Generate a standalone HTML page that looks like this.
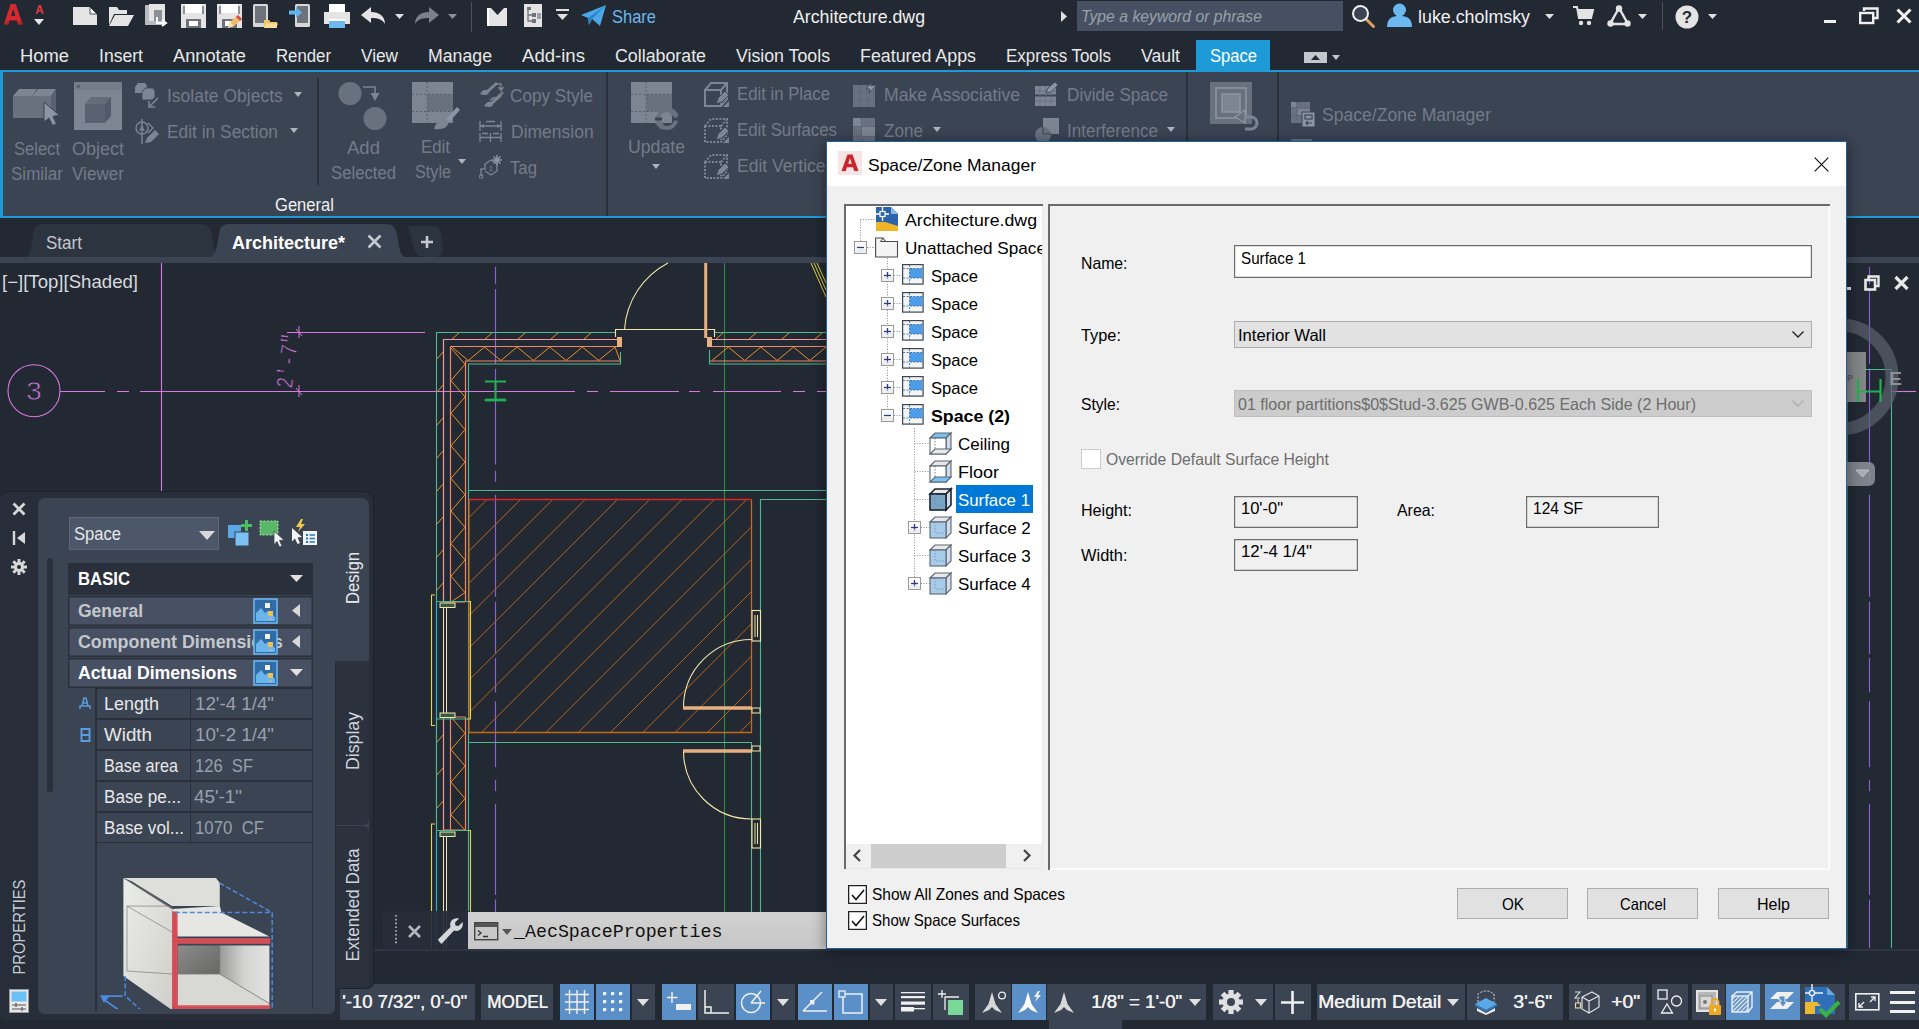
<!DOCTYPE html>
<html><head><meta charset="utf-8"><title>Architecture.dwg</title>
<style>
html,body{margin:0;padding:0;background:#222933;}
body{width:1919px;height:1029px;position:relative;overflow:hidden;font-family:"Liberation Sans",sans-serif;}
.a{position:absolute;display:block;}
.t{position:absolute;white-space:pre;transform-origin:0 50%;}
svg{overflow:visible}
svg text{font-family:"Liberation Sans",sans-serif;}
</style></head><body>
<!-- s_title -->
<div class="a" style="left:0px;top:0px;width:1919px;height:70px;background:#222933;"></div>
<svg class="a" style="left:3px;top:2.5px;" width="20.5" height="23.5" viewBox="0 0 24 27"><path d="M1 25 L9 1 L15 1 L23 25 L17.5 25 L15.8 19.5 L8 19.5 L6.3 25 Z M9.5 15 L14.4 15 L12 6.5 Z" fill="#d42a2f"/><path d="M1 25 L6.3 25 L8 19.5 L15.8 19.5 L17.5 25 L23 25 L21.5 21 L3 21Z" fill="#a81c22" opacity=".55"/></svg>
<svg class="a" style="left:34.5px;top:5px;" width="9.5" height="9.5" viewBox="0 0 12 14"><path d="M0 13 L4.3 0 L7.7 0 L12 13 L9 13 L8.2 10 L3.8 10 L3 13 Z M4.7 7.6 L7.3 7.6 L6 3 Z" fill="#e0383d"/></svg>
<svg class="a" style="left:34.3px;top:19.0px;" width="10" height="6"><polygon points="0,0 10,0 5.0,6" fill="#e6e6e6"/></svg>
<svg class="a" style="left:73px;top:7px;" width="25" height="19"><path d="M0 0 H17 L24 7 V18 H0 Z" fill="#e4e4e4"/><path d="M17 0 V7 H24 Z" fill="#fafafa" stroke="#222933" stroke-width=".8"/></svg>
<svg class="a" style="left:108px;top:6px;" width="26" height="20"><path d="M1 1 H9 L11 4 H19 V8 H6 L1 19 Z" fill="#e4e4e4"/><path d="M7 9 H26 L20 20 H1 Z" fill="#e4e4e4"/></svg>
<svg class="a" style="left:145px;top:4px;" width="24" height="23"><rect x="0" y="1" width="20" height="20" fill="#b9bcc2"/><rect x="4" y="0" width="16" height="17" fill="#e4e4e4"/><rect x="9" y="6" width="8" height="11" fill="#8c9098"/><path d="M12 13 V19 H20 M17 16 L21 19 L17 22" stroke="#fff" stroke-width="2" fill="none"/></svg>
<svg class="a" style="left:181px;top:4px;" width="25" height="24"><path d="M0 0 H25 V24 H0 Z" fill="#e4e4e4"/><rect x="4" y="0" width="17" height="9" fill="#fff"/><rect x="2" y="2" width="2" height="8" fill="#8c9098"/><rect x="21" y="2" width="2" height="8" fill="#8c9098"/><rect x="5" y="15" width="15" height="9" fill="#6d727b"/><rect x="8" y="17" width="9" height="5" fill="#fff"/></svg>
<svg class="a" style="left:217px;top:4px;" width="25" height="24"><path d="M0 0 H25 V24 H0 Z" fill="#e4e4e4"/><rect x="4" y="0" width="17" height="9" fill="#fff"/><rect x="2" y="2" width="2" height="8" fill="#8c9098"/><rect x="21" y="2" width="2" height="8" fill="#8c9098"/><rect x="5" y="15" width="15" height="9" fill="#6d727b"/><rect x="8" y="17" width="9" height="5" fill="#fff"/></svg>
<svg class="a" style="left:228px;top:15px;" width="14" height="13"><path d="M0 13 L2 7 L10 0 L14 4 L6 11 Z" fill="#f0c068"/><path d="M10 0 L14 4 L12 6 L8 2Z" fill="#e0484d"/><path d="M0 13 L2 7 L6 11Z" fill="#f6e0b0"/></svg>
<svg class="a" style="left:253px;top:4px;" width="24" height="24"><rect x="0" y="0" width="15" height="23" rx="1.5" fill="#d8d8d8"/><rect x="2" y="2" width="11" height="17" fill="#6d727b"/><path d="M11 16 H16 L17.5 18 H24 V24 H11 Z" fill="#f0c46c"/><path d="M13 19.5 H25 L23 24 H11Z" fill="#f7dc9a"/></svg>
<svg class="a" style="left:289px;top:4px;" width="22" height="24"><rect x="6" y="0" width="15" height="23" rx="1.5" fill="#d8d8d8"/><rect x="8" y="2" width="11" height="17" fill="#6d727b"/><path d="M0 6.5 H7 V3 L13 8.5 L7 14 V10.5 H0Z" fill="#5fb4f0"/></svg>
<svg class="a" style="left:324px;top:4px;" width="26" height="24"><rect x="5" y="0" width="16" height="8" fill="#fff"/><path d="M0 8 H26 V20 H21 V15 H5 V20 H0Z" fill="#e4e4e4"/><rect x="5" y="16" width="16" height="8" fill="#6cb8f0"/><rect x="5" y="15" width="16" height="2" fill="#fff"/></svg>
<svg class="a" style="left:361px;top:7px;" width="25" height="17"><path d="M0 8 L10 0 V5 C18 5 24 9 24 17 C21 12 17 11 10 11 V16 Z" fill="#e4e4e4"/></svg>
<svg class="a" style="left:394.5px;top:13.5px;" width="9" height="5"><polygon points="0,0 9,0 4.5,5" fill="#e0e0e0"/></svg>
<svg class="a" style="left:414px;top:7px;" width="25" height="17"><path d="M25 8 L15 0 V5 C7 5 1 9 1 17 C4 12 8 11 15 11 V16 Z" fill="#7a808c"/></svg>
<svg class="a" style="left:447.5px;top:13.5px;" width="9" height="5"><polygon points="0,0 9,0 4.5,5" fill="#8a909c"/></svg>
<div class="a" style="left:471px;top:2px;width:1px;height:30px;background:#4a5260;"></div>
<svg class="a" style="left:487px;top:6px;" width="21" height="21"><path d="M1 2 L4 2 L10.5 9 L17 2 L20 2 V20 H1 Z" fill="#e4e4e4"/><path d="M1 2 V20" stroke="#fff" stroke-width="2"/><path d="M4 0 L17 0 L10.5 7Z" fill="#222933"/></svg>
<svg class="a" style="left:524px;top:4px;" width="18" height="23"><path d="M0 0 H13 L18 0 V23 H0Z" fill="#e4e4e4"/><path d="M4 5 V17 H8 M4 11 H8" stroke="#6d727b" stroke-width="1.3" fill="none"/><rect x="8" y="9" width="4" height="4" fill="#6d727b"/><rect x="8" y="15" width="4" height="4" fill="#6d727b"/><rect x="3" y="3" width="4" height="3" fill="#6d727b"/><rect x="13" y="9" width="4" height="6" fill="#9aa0a8"/></svg>
<div class="a" style="left:556px;top:9px;width:13px;height:2px;background:#e0e0e0;"></div>
<svg class="a" style="left:557.0px;top:14.0px;" width="11" height="6"><polygon points="0,0 11,0 5.5,6" fill="#e0e0e0"/></svg>
<svg class="a" style="left:581px;top:5px;" width="25" height="21"><path d="M0 10 L25 0 L19 21 L11 14 L8 20 L7 13 Z" fill="#4aa8e8"/><path d="M7 13 L25 0 L11 14 L8 20Z" fill="#2b84c8"/></svg>
<span class="t" style="left:612.0px;top:8.2px;font-size:18px;line-height:18px;color:#6cb8f0;transform:scaleX(0.9160);">Share</span>
<span class="t" style="left:793.0px;top:8.5px;font-size:17.5px;line-height:17.5px;color:#f0f0f0;transform:scaleX(1.0127);">Architecture.dwg</span>
<svg class="a" style="left:1060.5px;top:11.0px;" width="6" height="11"><polygon points="0,0 0,11 6,5.5" fill="#e0e0e0"/></svg>
<div class="a" style="left:1077px;top:1px;width:266px;height:30px;background:#475062;"></div>
<span class="t" style="left:1081.0px;top:8.4px;font-size:16.5px;line-height:16.5px;color:#98a0ac;font-style:italic;transform:scaleX(0.9550);">Type a keyword or phrase</span>
<svg class="a" style="left:1351px;top:4px;" width="25" height="25"><path d="M15 15 L22.5 22.5" stroke="#d9a066" stroke-width="3" stroke-linecap="round"/><circle cx="9.5" cy="9.5" r="7.5" fill="#3b4453" stroke="#f0f0f0" stroke-width="2"/></svg>
<svg class="a" style="left:1387px;top:3px;" width="25" height="24"><circle cx="12.5" cy="7" r="6.5" fill="#6cb8f0"/><path d="M0 24 C0 15 5 13 12.5 13 C20 13 25 15 25 24Z" fill="#6cb8f0"/></svg>
<span class="t" style="left:1418.0px;top:8.2px;font-size:18px;line-height:18px;color:#f0f0f0;transform:scaleX(0.9908);">luke.cholmsky</span>
<svg class="a" style="left:1544.5px;top:13.5px;" width="9" height="5"><polygon points="0,0 9,0 4.5,5" fill="#e0e0e0"/></svg>
<svg class="a" style="left:1573px;top:6px;" width="21" height="21"><path d="M0 1 H4 L6 12 H18 L20 4 H5" fill="none" stroke="#e4e4e4" stroke-width="2"/><rect x="6" y="5" width="13" height="6" fill="#e4e4e4"/><circle cx="8" cy="17" r="2.2" fill="#e4e4e4"/><circle cx="16" cy="17" r="2.2" fill="#e4e4e4"/></svg>
<svg class="a" style="left:1607px;top:5px;" width="24" height="22"><path d="M12 3 L3 19 H21 Z" fill="none" stroke="#e4e4e4" stroke-width="2.4"/><circle cx="12" cy="3.5" r="3.2" fill="#e4e4e4"/><circle cx="3.5" cy="18.5" r="3.2" fill="#e4e4e4"/><circle cx="20.5" cy="18.5" r="3.2" fill="#e4e4e4"/></svg>
<svg class="a" style="left:1637.5px;top:13.5px;" width="9" height="5"><polygon points="0,0 9,0 4.5,5" fill="#e0e0e0"/></svg>
<div class="a" style="left:1662px;top:2px;width:1px;height:28px;background:#4a5260;"></div>
<svg class="a" style="left:1675px;top:5px;" width="24" height="24"><circle cx="12" cy="12" r="11.5" fill="#e4e4e4"/><text x="12" y="18" font-size="17" font-weight="bold" text-anchor="middle" fill="#222933">?</text></svg>
<svg class="a" style="left:1707.5px;top:13.5px;" width="9" height="5"><polygon points="0,0 9,0 4.5,5" fill="#e0e0e0"/></svg>
<div class="a" style="left:1824px;top:20px;width:12px;height:3px;background:#f0f0f0;"></div>
<svg class="a" style="left:1859px;top:7px;" width="20" height="18"><path d="M5 4 V1.5 H18.5 V11 H15" fill="none" stroke="#f0f0f0" stroke-width="2.4"/><rect x="1.2" y="6" width="13" height="10" fill="none" stroke="#f0f0f0" stroke-width="2.4"/></svg>
<svg class="a" style="left:1896px;top:8px;" width="16" height="16"><path d="M1.5 1.5 L14.5 14.5 M14.5 1.5 L1.5 14.5" stroke="#f0f0f0" stroke-width="3"/></svg>
<div class="a" style="left:1196px;top:40px;width:74px;height:31px;background:#1e9bd7;"></div>
<span class="t" style="left:20.0px;top:47.5px;font-size:17.5px;line-height:17.5px;color:#e8e8e8;transform:scaleX(1.0496);">Home</span>
<span class="t" style="left:99.0px;top:47.5px;font-size:17.5px;line-height:17.5px;color:#e8e8e8;transform:scaleX(1.0053);">Insert</span>
<span class="t" style="left:173.0px;top:47.5px;font-size:17.5px;line-height:17.5px;color:#e8e8e8;transform:scaleX(1.0419);">Annotate</span>
<span class="t" style="left:276.0px;top:47.5px;font-size:17.5px;line-height:17.5px;color:#e8e8e8;transform:scaleX(0.9582);">Render</span>
<span class="t" style="left:361.0px;top:47.5px;font-size:17.5px;line-height:17.5px;color:#e8e8e8;transform:scaleX(0.9836);">View</span>
<span class="t" style="left:428.0px;top:47.5px;font-size:17.5px;line-height:17.5px;color:#e8e8e8;transform:scaleX(1.0120);">Manage</span>
<span class="t" style="left:522.0px;top:47.5px;font-size:17.5px;line-height:17.5px;color:#e8e8e8;transform:scaleX(1.0617);">Add-ins</span>
<span class="t" style="left:615.0px;top:47.5px;font-size:17.5px;line-height:17.5px;color:#e8e8e8;transform:scaleX(1.0167);">Collaborate</span>
<span class="t" style="left:736.0px;top:47.5px;font-size:17.5px;line-height:17.5px;color:#e8e8e8;transform:scaleX(1.0135);">Vision Tools</span>
<span class="t" style="left:860.0px;top:47.5px;font-size:17.5px;line-height:17.5px;color:#e8e8e8;transform:scaleX(1.0191);">Featured Apps</span>
<span class="t" style="left:1006.0px;top:47.5px;font-size:17.5px;line-height:17.5px;color:#e8e8e8;transform:scaleX(0.9667);">Express Tools</span>
<span class="t" style="left:1141.0px;top:47.5px;font-size:17.5px;line-height:17.5px;color:#e8e8e8;transform:scaleX(1.0106);">Vault</span>
<span class="t" style="left:1210.0px;top:47.5px;font-size:17.5px;line-height:17.5px;color:#ffffff;transform:scaleX(0.9472);">Space</span>
<svg class="a" style="left:1304px;top:52px;" width="23" height="11"><rect width="23" height="11" fill="#c4c8ce"/><polygon points="7,8 16,8 11.5,3" fill="#222933"/></svg>
<svg class="a" style="left:1331.5px;top:55.0px;" width="8" height="5"><polygon points="0,0 8,0 4.0,5" fill="#c4c8ce"/></svg>
<div class="a" style="left:0px;top:70px;width:1919px;height:2px;background:#1e9bd7;"></div>
<!-- s_ribbon -->
<div class="a" style="left:0px;top:72px;width:1919px;height:144px;background:#3b4453;"></div>
<div class="a" style="left:0px;top:70px;width:3px;height:148px;background:#1e9bd7;"></div>
<div class="a" style="left:0px;top:216.4px;width:1919px;height:1.6px;background:#1e9bd7;"></div>
<div class="a" style="left:317px;top:78px;width:2px;height:107px;background:#2a303b;"></div>
<div class="a" style="left:606px;top:72px;width:2px;height:144px;background:#2a303b;"></div>
<div class="a" style="left:1186px;top:72px;width:2px;height:144px;background:#2a303b;"></div>
<div class="a" style="left:1277px;top:72px;width:2px;height:144px;background:#2a303b;"></div>
<svg class="a" style="left:13px;top:84px;" width="48" height="42"><path d="M0 12 L6 5 H24 L19 12Z" fill="#7d8492"/><rect x="0" y="12" width="19" height="22" fill="#69707e"/><path d="M19 12 L25 5 H43 L38 12Z" fill="#7d8492"/><rect x="19" y="12" width="19" height="22" fill="#69707e"/><path d="M38 12 L43 5 V27 L38 34Z" fill="#596070"/><path d="M31 18 L46 31 L40 32.5 L43.5 40 L39.5 41.5 L36 34 L31 38Z" fill="#8d94a2" stroke="#3b4453" stroke-width="1"/></svg>
<span class="t" style="left:14.0px;top:140.5px;font-size:17.5px;line-height:17.5px;color:#737b8a;transform:scaleX(0.9457);">Select</span>
<span class="t" style="left:11.0px;top:165.5px;font-size:17.5px;line-height:17.5px;color:#737b8a;transform:scaleX(0.9724);">Similar</span>
<svg class="a" style="left:74px;top:82px;" width="48" height="48"><rect width="48" height="48" fill="#7d8492"/><rect width="48" height="8" fill="#747b89"/><rect x="3" y="3" width="3" height="3" fill="#596070"/><path d="M11 22 L17 15 H37 L31 22Z" fill="#646b79"/><rect x="11" y="22" width="20" height="19" fill="#596070"/><path d="M31 22 L37 15 V34 L31 41Z" fill="#525968"/></svg>
<span class="t" style="left:72.0px;top:140.5px;font-size:17.5px;line-height:17.5px;color:#737b8a;transform:scaleX(1.0281);">Object</span>
<span class="t" style="left:72.0px;top:165.5px;font-size:17.5px;line-height:17.5px;color:#737b8a;transform:scaleX(0.9778);">Viewer</span>
<svg class="a" style="left:135px;top:82px;" width="25" height="26"><path d="M0 5 L3 1 H10 L12 4 V9 L8 11 H0Z" fill="#7d8492"/><path d="M7 10 L10 6 H18 L20 9 V15 L17 18 H7Z" fill="#7d8492" stroke="#3b4453" stroke-width=".8"/><path d="M23 16 L15 24 M14 19 V25 H20" stroke="#7d8492" stroke-width="1.6" fill="none"/></svg>
<span class="t" style="left:167.0px;top:87.5px;font-size:17.5px;line-height:17.5px;color:#737b8a;">Isolate Objects</span>
<svg class="a" style="left:294.0px;top:91.5px;" width="8" height="5"><polygon points="0,0 8,0 4.0,5" fill="#aeb3bc"/></svg>
<svg class="a" style="left:135px;top:119px;" width="25" height="26"><circle cx="7" cy="9" r="6" fill="none" stroke="#7d8492" stroke-width="1.4"/><path d="M7 0 V25 M13 4 L18 9 L13 14" stroke="#7d8492" stroke-width="1.4" fill="none"/><text x="7" y="12" font-size="8" font-weight="bold" text-anchor="middle" fill="#7d8492">A</text><path d="M10 24 L12 19 L20 11 L24 15 L16 23Z" fill="#7d8492"/></svg>
<span class="t" style="left:167.0px;top:123.5px;font-size:17.5px;line-height:17.5px;color:#737b8a;transform:scaleX(0.9922);">Edit in Section</span>
<svg class="a" style="left:290.0px;top:127.5px;" width="8" height="5"><polygon points="0,0 8,0 4.0,5" fill="#aeb3bc"/></svg>
<svg class="a" style="left:338px;top:81px;" width="40" height="50"><circle cx="12" cy="12.5" r="11.5" fill="#69707e"/><circle cx="37" cy="37.5" r="11.5" fill="#69707e"/><path d="M25 6 H37 V12" stroke="#7d8492" stroke-width="1.6" fill="none"/><path d="M32.5 12 H41.5 L37 20Z" fill="#7d8492"/></svg>
<span class="t" style="left:346.5px;top:140.0px;font-size:17.5px;line-height:17.5px;color:#737b8a;transform:scaleX(1.0598);">Add</span>
<span class="t" style="left:330.5px;top:165.0px;font-size:17.5px;line-height:17.5px;color:#737b8a;transform:scaleX(0.9544);">Selected</span>
<svg class="a" style="left:412px;top:82px;" width="50" height="50"><rect x="0" y="0" width="41" height="41" fill="#7d8492"/><rect x="15.17" y="12.299999999999999" width="25.830000000000002" height="17.22" fill="#69707e"/><path d="M15.17 0 V41 M0 12.299999999999999 H41 M0 29.52 H41" stroke="#596070" stroke-width="1" stroke-dasharray="2 2" fill="none"/><path d="M22 47 C24 40 28 37 33 38 L36 41 C36 45 31 48 22 47Z" fill="#7d8492"/><path d="M34 37 L45 25 L48 28 L37 40Z" fill="#8d94a2"/></svg>
<span class="t" style="left:420.5px;top:138.5px;font-size:17.5px;line-height:17.5px;color:#737b8a;transform:scaleX(0.9617);">Edit</span>
<span class="t" style="left:415.0px;top:163.5px;font-size:17.5px;line-height:17.5px;color:#737b8a;transform:scaleX(0.9253);">Style</span>
<svg class="a" style="left:458.0px;top:158.5px;" width="8" height="5"><polygon points="0,0 8,0 4.0,5" fill="#aeb3bc"/></svg>
<svg class="a" style="left:479px;top:82px;" width="25" height="26"><path d="M1 12 C3 8 6 7 8 8 L17 0 L19 2 L10 10 C10 13 6 14 1 12Z" fill="#7d8492"/><path d="M5 24 C7 20 10 19 12 20 L21 12 L23 14 L14 22 C14 25 10 26 5 24Z" fill="#7d8492"/><path d="M10 19 C12 15 15 14 17 15 L23 9 L25 11 L19 17Z" fill="#7d8492" opacity=".8"/><path d="M16 2 H22 V7 M19.5 5 L22 8.5 L24.5 5" stroke="#7d8492" stroke-width="1.3" fill="none"/></svg>
<span class="t" style="left:510.0px;top:87.5px;font-size:17.5px;line-height:17.5px;color:#737b8a;transform:scaleX(0.9808);">Copy Style</span>
<svg class="a" style="left:479px;top:120px;" width="24" height="23"><path d="M1 1 V11 M22 1 V11 M1 6 H22 M7 1.5 H16" stroke="#7d8492" stroke-width="1.3" fill="none"/><path d="M1 6 L5 4 V8Z M22 6 L18 4 V8Z" fill="#7d8492"/><path d="M1 13 V22 M11.5 13 V22 M22 13 V22 M1 17.5 H22 M3 13.5 H9 M14 13.5 H20" stroke="#7d8492" stroke-width="1.3" fill="none"/></svg>
<span class="t" style="left:511.0px;top:123.5px;font-size:17.5px;line-height:17.5px;color:#737b8a;">Dimension</span>
<svg class="a" style="left:479px;top:155px;" width="25" height="25"><path d="M2 21 V14 H6 L6 9 L12 5 L18 9 V16 L12 20 L6 16" fill="none" stroke="#7d8492" stroke-width="1.4"/><rect x="0.7" y="20" width="3" height="3" fill="none" stroke="#7d8492" stroke-width="1"/><text x="12" y="16" font-size="8" text-anchor="middle" fill="#7d8492">1</text><path d="M18 0 V10 M13 5 H23 M14.5 1.5 L21.5 8.5 M21.5 1.5 L14.5 8.5" stroke="#8d94a2" stroke-width="1.5"/></svg>
<span class="t" style="left:510.0px;top:159.5px;font-size:17.5px;line-height:17.5px;color:#737b8a;transform:scaleX(0.9569);">Tag</span>
<svg class="a" style="left:631px;top:82px;" width="52" height="50"><rect x="0" y="0" width="41" height="41" fill="#7d8492"/><rect x="15.17" y="12.299999999999999" width="25.830000000000002" height="17.22" fill="#69707e"/><path d="M15.17 0 V41 M0 12.299999999999999 H41 M0 29.52 H41" stroke="#596070" stroke-width="1" stroke-dasharray="2 2" fill="none"/><circle cx="36" cy="37" r="9" fill="none" stroke="#69707e" stroke-width="4"/><path d="M24 37 H31 M41 37 H48" stroke="#3b4453" stroke-width="3"/><path d="M42 26 L48 33 L39 34Z M30 48 L24 41 L33 40Z" fill="#69707e"/></svg>
<span class="t" style="left:627.5px;top:139.0px;font-size:17.5px;line-height:17.5px;color:#737b8a;transform:scaleX(1.0101);">Update</span>
<svg class="a" style="left:652.0px;top:163.5px;" width="8" height="5"><polygon points="0,0 8,0 4.0,5" fill="#aeb3bc"/></svg>
<svg class="a" style="left:704px;top:82px;" width="26" height="26"><path d="M1 8 L7 1 H23 V17 L17 24 H1 Z" fill="none" stroke="#7d8492" stroke-width="2"/><path d="M1 8 H17 V24 M17 8 L23 1" fill="none" stroke="#7d8492" stroke-width="2"/><path d="M12 22 L14 16 L21 9 L25 13 L18 20 Z" fill="#7d8492" stroke="#3b4453" stroke-width="1"/><path d="M25 19 V25 H19 Z" fill="#7d8492"/></svg>
<span class="t" style="left:737.0px;top:86.0px;font-size:17.5px;line-height:17.5px;color:#737b8a;transform:scaleX(0.9560);">Edit in Place</span>
<svg class="a" style="left:704px;top:118px;" width="26" height="26"><path d="M1 8 L7 1 H23 V17 L17 24 H1 Z" fill="none" stroke="#7d8492" stroke-width="2" stroke-dasharray="2 1.5"/><path d="M1 8 H17 V24 M17 8 L23 1" fill="none" stroke="#7d8492" stroke-width="2" stroke-dasharray="2 1.5"/><path d="M12 22 L14 16 L21 9 L25 13 L18 20 Z" fill="#7d8492" stroke="#3b4453" stroke-width="1"/><path d="M25 19 V25 H19 Z" fill="#7d8492"/></svg>
<span class="t" style="left:737.0px;top:122.0px;font-size:17.5px;line-height:17.5px;color:#737b8a;transform:scaleX(0.9608);">Edit Surfaces</span>
<svg class="a" style="left:704px;top:154px;" width="26" height="26"><path d="M1 8 L7 1 H23 V17 L17 24 H1 Z" fill="none" stroke="#7d8492" stroke-width="2" stroke-dasharray="2 1.5"/><path d="M1 8 H17 V24 M17 8 L23 1" fill="none" stroke="#7d8492" stroke-width="2" stroke-dasharray="2 1.5"/><path d="M12 22 L14 16 L21 9 L25 13 L18 20 Z" fill="#7d8492" stroke="#3b4453" stroke-width="1"/><path d="M25 19 V25 H19 Z" fill="#7d8492"/></svg>
<span class="t" style="left:737.0px;top:158.0px;font-size:17.5px;line-height:17.5px;color:#737b8a;">Edit Vertices</span>
<svg class="a" style="left:853px;top:82px;" width="24" height="25"><rect x="0" y="3" width="22" height="22" fill="#69707e"/><path d="M7 3 V25 M0 10 H22 M15 3 V25 M0 18 H22" stroke="#596070" stroke-width="1" stroke-dasharray="2 2"/><path d="M13 7 L19 0 L18 4 L24 3 L16 11 L17 7Z" fill="#8d94a2" stroke="#3b4453" stroke-width=".8"/></svg>
<span class="t" style="left:884.0px;top:86.5px;font-size:17.5px;line-height:17.5px;color:#737b8a;transform:scaleX(1.0059);">Make Associative</span>
<svg class="a" style="left:853px;top:118px;" width="23" height="24"><rect width="22" height="24" fill="#69707e"/><rect x="0" y="0" width="8" height="8" fill="#7d8492"/><rect x="9" y="9" width="13" height="9" fill="#7d8492"/><path d="M8.5 0 V24 M0 8.5 H22 M0 18.5 H22" stroke="#596070" stroke-width="1" stroke-dasharray="2 2"/></svg>
<span class="t" style="left:884.0px;top:122.5px;font-size:17.5px;line-height:17.5px;color:#737b8a;transform:scaleX(0.9777);">Zone</span>
<svg class="a" style="left:933.0px;top:126.5px;" width="8" height="5"><polygon points="0,0 8,0 4.0,5" fill="#aeb3bc"/></svg>
<svg class="a" style="left:1035px;top:82px;" width="24" height="25"><rect x="0" y="4" width="21" height="20" fill="#7d8492"/><path d="M0 13.5 H21" stroke="#3b4453" stroke-width="2"/><path d="M5 4 V24 M10.5 4 V24 M16 4 V24 M0 9 H21 M0 19 H21" stroke="#69707e" stroke-width=".8"/><path d="M11 11 L13 6 L20 0 L23 3 L16 10Z" fill="#8d94a2" stroke="#3b4453" stroke-width=".8"/></svg>
<span class="t" style="left:1067.0px;top:86.5px;font-size:17.5px;line-height:17.5px;color:#737b8a;transform:scaleX(0.9795);">Divide Space</span>
<svg class="a" style="left:1035px;top:118px;" width="25" height="25"><rect x="8" y="0" width="16" height="16" fill="#7d8492"/><circle cx="8" cy="17" r="8" fill="#69707e"/><path d="M8 9 V16 H16" stroke="#3b4453" stroke-width="1" fill="none"/></svg>
<span class="t" style="left:1067.0px;top:122.5px;font-size:17.5px;line-height:17.5px;color:#737b8a;transform:scaleX(0.9744);">Interference</span>
<svg class="a" style="left:1167.0px;top:126.5px;" width="8" height="5"><polygon points="0,0 8,0 4.0,5" fill="#aeb3bc"/></svg>
<svg class="a" style="left:1210px;top:82px;" width="50" height="50"><rect width="42" height="42" fill="#69707e"/><rect x="6" y="6" width="30" height="30" fill="none" stroke="#8d94a2" stroke-width="1.6"/><rect x="12" y="12" width="18" height="18" fill="#7d8492" stroke="#8d94a2" stroke-width="1.6"/><path d="M35 28 L25 35 L35 41Z" fill="#69707e" stroke="#8d94a2" stroke-width="1.4"/><path d="M34 35 H41 A6 6 0 0 1 41 47 H35" fill="none" stroke="#7d8492" stroke-width="3"/></svg>
<svg class="a" style="left:1291px;top:102px;" width="25" height="26"><rect width="19" height="21" fill="#69707e"/><rect x="0" y="0" width="5" height="5" fill="#7d8492"/><rect x="7" y="7" width="12" height="6" fill="#7d8492"/><path d="M6 0 V21 M0 6 H19 M0 14 H19" stroke="#596070" stroke-width="1" stroke-dasharray="2 2"/><rect x="11" y="10" width="13" height="15" fill="#8d94a2" stroke="#3b4453" stroke-width="1"/><rect x="14" y="13" width="7" height="4" fill="none" stroke="#3b4453" stroke-width="1.2"/><path d="M21 21 H15 M17 19 L15 21 L17 23" stroke="#3b4453" stroke-width="1.2" fill="none"/></svg>
<span class="t" style="left:1322.0px;top:106.5px;font-size:17.5px;line-height:17.5px;color:#737b8a;transform:scaleX(1.0041);">Space/Zone Manager</span>
<div class="a" style="left:1291px;top:139px;width:21px;height:3px;background:#69707e;"></div>
<span class="t" style="left:275.0px;top:196.5px;font-size:17.5px;line-height:17.5px;color:#f0f0f0;transform:scaleX(0.9476);">General</span>
<!-- s_tabs -->
<div class="a" style="left:0px;top:218px;width:1919px;height:40px;background:#222933;"></div>
<svg class="a" style="left:20px;top:224px;" width="200" height="34"><path d="M0 34 C10 34 10 30 13 10 C14 2 18 0 24 0 H180 C188 0 190 3 192 10 C195 30 196 34 204 34 Z" fill="#2c3440"/></svg>
<svg class="a" style="left:205px;top:224px;" width="205" height="34"><path d="M0 34 C9 34 11 30 14 10 C15 2 19 0 25 0 H180 C188 0 190 3 192 10 C195 30 196 34 205 34 Z" fill="#3b4453"/></svg>
<svg class="a" style="left:408px;top:226px;" width="38" height="32"><path d="M0 0 H26 C30 0 32 2 33 8 L35 24 C35 29 32 31 26 31 H16 C10 31 7 27 5 18 Z" fill="#2c3440"/></svg>
<span class="t" style="left:46.0px;top:234.5px;font-size:17.5px;line-height:17.5px;color:#c4c8cf;transform:scaleX(0.9741);">Start</span>
<span class="t" style="left:232.0px;top:234.5px;font-size:17.5px;line-height:17.5px;color:#ffffff;font-weight:bold;transform:scaleX(1.0282);">Architecture*</span>
<svg class="a" style="left:367px;top:234px;" width="15" height="15"><path d="M1.5 1.5 L13.5 13.5 M13.5 1.5 L1.5 13.5" stroke="#c4c8cf" stroke-width="2.6"/></svg>
<svg class="a" style="left:420px;top:235px;" width="14" height="14"><path d="M7 1 V13 M1 7 H13" stroke="#c4c8cf" stroke-width="2.6"/></svg>
<div class="a" style="left:0px;top:257px;width:1919px;height:6px;background:#3b4453;"></div>
<!-- s_draw -->
<svg class="a" style="left:0px;top:0px;" width="1919" height="1029"><circle cx="34" cy="390.8" r="26" stroke="#d878e0" fill="none" stroke-width="1.1"/><text x="34" y="400" font-size="28" fill="#d878e0" text-anchor="middle" style="font-family:'Liberation Mono',monospace" stroke="#222933" stroke-width=".8">3</text><path d="M60 391.5 H105 M117 391.5 H129 M140 391.5 H575 M587 391.5 H598 M610 391.5 H679 M689 391.5 H700 M713 391.5 H781 M793 391.5 H805 M817 391.5 H830" stroke="#d878e0" stroke-width="1.1" fill="none"/><path d="M161.5 263 L161.5 492" stroke="#d878e0" stroke-width="1.1" fill="none"/><path d="M287 332.5 L425 332.5" stroke="#d878e0" stroke-width="1.1" fill="none"/><path d="M299 326 V338 M296 329 L302 336 M299 385 V397 M296 388 L302 395" stroke="#d878e0" stroke-width="1" fill="none"/><text transform="translate(292,389) rotate(-83)" font-size="24" fill="#d878e0" style="font-family:'Liberation Mono',monospace" textLength="55" lengthAdjust="spacingAndGlyphs" stroke="#222933" stroke-width=".7">2'-7"</text><path d="M495.5 266.8 V284.3 M495.5 289 V364 M495.5 368.8 V464.4 M495.5 470.8 V482 M495.5 494.7 V596.7 M495.5 601.5 V654 M495.5 658 V692.4 M495.5 701.3 V767.3 M495.5 780 V791.2 M495.5 804 V895 M495.5 899.6 V948" stroke="#8c5ed8" stroke-width="1.2" fill="none"/><path d="M1869.5 266.8 V284.3 M1869.5 289 V364 M1869.5 368.8 V464.4 M1869.5 470.8 V482 M1869.5 494.7 V596.7 M1869.5 601.5 V654 M1869.5 658 V692.4 M1869.5 701.3 V767.3 M1869.5 780 V791.2 M1869.5 804 V895 M1869.5 899.6 V948" stroke="#8c5ed8" stroke-width="1.1" fill="none"/><path d="M724.5 263 L724.5 948" stroke="#2e8c44" stroke-width="1.1" fill="none"/><path d="M436.5 602 V332.5 H615.5" stroke="#4fb890" stroke-width="1.1" fill="none"/><path d="M443.5 602 V339.5 H620" stroke="#f09aa0" stroke-width="1.2" fill="none"/><path d="M450.5 602 V346.5 H620" stroke="#f08868" stroke-width="1.2" fill="none"/><path d="M465.5 602 V361 H620" stroke="#f08868" stroke-width="1.2" fill="none"/><path d="M468.5 948 V364 H620.5 V352" stroke="#4fb890" stroke-width="1.1" fill="none"/><path d="M615.5 332.5 V329" stroke="#4fb890" stroke-width="1" fill="none"/><path d="M714.5 329 V332.5 H830" stroke="#4fb890" stroke-width="1.1" fill="none"/><path d="M710 339.5 H830" stroke="#f09aa0" stroke-width="1.2" fill="none"/><path d="M710 346.5 H830" stroke="#f08868" stroke-width="1.2" fill="none"/><path d="M710 361 H830" stroke="#f08868" stroke-width="1.2" fill="none"/><path d="M709.5 350 V364 H830" stroke="#4fb890" stroke-width="1.1" fill="none"/><path d="M436.5 717 L436.5 830" stroke="#4fb890" stroke-width="1.2" fill="none"/><path d="M443.5 717 L443.5 830" stroke="#f09aa0" stroke-width="1.2" fill="none"/><path d="M450.5 717 L450.5 830" stroke="#f08868" stroke-width="1.2" fill="none"/><path d="M465.5 717 L465.5 830" stroke="#f08868" stroke-width="1.2" fill="none"/><path d="M443.5 602 L465.5 602" stroke="#f08868" stroke-width="1" fill="none"/><path d="M450.5 717 L465.5 717" stroke="#f08868" stroke-width="1" fill="none"/><path d="M443.5 830 L465.5 830" stroke="#f08868" stroke-width="1" fill="none"/><path d="M452 339 L459 333 M485 339 L492 333 M518 339 L525 333 M551 339 L558 333 M584 339 L591 333 M716 339 L723 333 M749 339 L756 333 M782 339 L789 333 M815 339 L822 333 M437 359 L443 352 M437 392 L443 385 M437 425 L443 418 M437 458 L443 451 M437 491 L443 484 M437 524 L443 517 M437 557 L443 550 M437 590 L443 583 M437 742 L443 735 M437 775 L443 768 M437 808 L443 801" stroke="#e8902c" stroke-width="1" fill="none"/><path d="M452.0 347 L468.3 360.5 L484.6 347 L500.9 360.5 L517.2 347 L533.5 360.5 L549.8 347 L566.1 360.5 L582.4 347 L598.7 360.5 L615.0 347 L620.0 360.5" stroke="#e8902c" stroke-width="1" fill="none"/><path d="M712.0 360.5 L728.3 347 L744.6 360.5 L760.9 347 L777.2 360.5 L793.5 347 L809.8 360.5 L826.1 347 L834.0 360.5" stroke="#e8902c" stroke-width="1" fill="none"/><path d="M451 348.0 L465 364.3 L451 380.6 L465 396.9 L451 413.2 L465 429.5 L451 445.8 L465 462.1 L451 478.4 L465 494.7 L451 511.0 L465 527.3 L451 543.6 L465 559.9 L451 576.2 L465 592.5 L451 602.0" stroke="#e8902c" stroke-width="1" fill="none"/><path d="M451 717.0 L465 733.3 L451 749.6 L465 765.9 L451 782.2 L465 798.5 L451 814.8 L465 830.0" stroke="#e8902c" stroke-width="1" fill="none"/><rect x="617" y="337" width="5" height="10" fill="#e8b080"/><rect x="707" y="337" width="5" height="10" fill="#e8b080"/><path d="M615.5 337 V329.5 H714.5 V337" stroke="#f2e6a8" stroke-width="1.1" fill="none"/><path d="M705.7 263 L705.7 338" stroke="#e8b080" stroke-width="3" fill="none"/><path d="M624.5 329.5 A81 81 0 0 1 668 263" stroke="#f2e6a8" stroke-width="1.1" fill="none"/><path d="M811 263 L826 297 M814 263 L826 290 M817 263 L826 283" stroke="#e8d838" stroke-width="1" fill="none"/><path d="M468.5 490.5 L830 490.5" stroke="#4fb890" stroke-width="1.1" fill="none"/><path d="M830 499.5 H760.5 V912" stroke="#4fb890" stroke-width="1.1" fill="none"/><path d="M468.5 742.5 H751.5 V912" stroke="#4fb890" stroke-width="1.1" fill="none"/><path d="M520.5 499.5 L469.0 551.0 M552.8 499.5 L469.0 583.3 M585.1 499.5 L469.0 615.6 M617.4 499.5 L469.0 647.9 M649.7 499.5 L469.0 680.2 M682.0 499.5 L469.0 712.5 M714.3 499.5 L481.3 732.5 M746.6 499.5 L513.6 732.5 M751.5 526.9 L545.9 732.5 M751.5 559.2 L578.2 732.5 M751.5 591.5 L610.5 732.5 M751.5 623.8 L642.8 732.5 M751.5 656.1 L675.1 732.5 M751.5 688.4 L707.4 732.5 M751.5 720.7 L739.7 732.5 M487 499.5 L469 517.5" stroke="#c0641c" stroke-width="0.95" fill="none"/><path d="M469 499.5 V732.5 H751.5 V499.5" stroke="#c86818" stroke-width="1.3" fill="none"/><path d="M469 499.5 L751.5 499.5" stroke="#e02424" stroke-width="1.4" fill="none"/><rect x="752" y="610.5" width="8.5" height="30.5" fill="none" stroke="#f2e6a8" stroke-width="1.1"/><path d="M755 615 V637 M757.5 615 V637" stroke="#f2e6a8" stroke-width="1" fill="none"/><path d="M751.5 639.5 A68 68 0 0 0 683.5 707.5" stroke="#f2e6a8" stroke-width="1.1" fill="none"/><path d="M683 708 L752 708" stroke="#e8b080" stroke-width="3.4" fill="none"/><rect x="752" y="708" width="8" height="5" fill="none" stroke="#f2e6a8" stroke-width="1"/><path d="M683 751 L752 751" stroke="#e8b080" stroke-width="3.4" fill="none"/><rect x="752" y="746" width="8" height="5" fill="none" stroke="#f2e6a8" stroke-width="1"/><path d="M683.5 751.5 A68 68 0 0 0 751.5 819" stroke="#f2e6a8" stroke-width="1.1" fill="none"/><rect x="752" y="819" width="8.5" height="29" fill="none" stroke="#f2e6a8" stroke-width="1.1"/><path d="M755 823 V844 M757.5 823 V844" stroke="#f2e6a8" stroke-width="1" fill="none"/><path d="M435 595.0 H431.5 V725.5 H435" stroke="#e8d838" stroke-width="1.1" fill="none"/><path d="M467 601.5 H470.5 V719 H467" stroke="#e8d838" stroke-width="1.1" fill="none"/><path d="M436.5 601.5 L436.5 719" stroke="#30b0c8" stroke-width="1.2" fill="none"/><rect x="440" y="603.0" width="15" height="4.5" fill="#3a5a48" stroke="#f2e6a8" stroke-width="1"/><path d="M443.5 607.5 V713 M446.5 607.5 V713" stroke="#f2e6a8" stroke-width="1" fill="none"/><path d="M436.5 601.5 L468.5 601.5" stroke="#4fb890" stroke-width="1" fill="none"/><rect x="440" y="713" width="15" height="4.5" fill="#3a5a48" stroke="#f2e6a8" stroke-width="1"/><path d="M436.5 719 L468.5 719" stroke="#4fb890" stroke-width="1" fill="none"/><path d="M435 824.0 H431.5 V948 " stroke="#e8d838" stroke-width="1.1" fill="none"/><path d="M467 830.5 H470.5 V948 " stroke="#e8d838" stroke-width="1.1" fill="none"/><path d="M436.5 830.5 L436.5 948" stroke="#30b0c8" stroke-width="1.2" fill="none"/><rect x="440" y="832.0" width="15" height="4.5" fill="#3a5a48" stroke="#f2e6a8" stroke-width="1"/><path d="M443.5 836.5 V948 M446.5 836.5 V948" stroke="#f2e6a8" stroke-width="1" fill="none"/><path d="M436.5 830.5 L468.5 830.5" stroke="#4fb890" stroke-width="1" fill="none"/><path d="M485 381.5 H506 M495.5 381.5 V400 M485 400 H506" stroke="#22b050" stroke-width="2" fill="none"/><path d="M486 400 H505" stroke="#22b050" stroke-width="3.2" fill="none" stroke-linecap="round" opacity=".8"/><path d="M1847 400 L1847 948" stroke="#4fb890" stroke-width="1.1" fill="none"/><path d="M1865 369.5 H1891.5 V948" stroke="#4fb890" stroke-width="1.1" fill="none"/><path d="M1891 391.5 L1916 391.5" stroke="#d878e0" stroke-width="1.1" fill="none"/></svg>
<span class="t" style="left:2.0px;top:273.5px;font-size:17.5px;line-height:17.5px;color:#d8dade;transform:scaleX(1.0630);">[−][Top][Shaded]</span>
<div class="a" style="left:1846px;top:287px;width:5px;height:3px;background:#e8e8e8;"></div>
<svg class="a" style="left:1864px;top:275px;" width="16" height="16"><path d="M4.5 4 V1.5 H14.5 V11 H12" fill="none" stroke="#e8e8e8" stroke-width="2.4"/><rect x="1.5" y="5" width="9.5" height="9.5" fill="none" stroke="#e8e8e8" stroke-width="2.6"/></svg>
<svg class="a" style="left:1894px;top:276px;" width="15" height="14"><path d="M1.5 1 L13.5 13 M13.5 1 L1.5 13" stroke="#e8e8e8" stroke-width="3.2"/></svg>
<svg class="a" style="left:1780px;top:316px;" width="120" height="122"><circle cx="60" cy="61" r="52" fill="none" stroke="#5a616d" stroke-width="13" opacity=".72"/></svg>
<div class="a" style="left:1846px;top:352px;width:20px;height:50px;background:#9c9c9c;opacity:.8;"></div>
<span class="t" style="left:1847.0px;top:373.6px;font-size:9px;line-height:9px;color:#5a5a5a;font-weight:bold;">P</span>
<span class="t" style="left:1889.0px;top:368.7px;font-size:19px;line-height:19px;color:#8c9096;font-weight:bold;transform:scaleX(1.0258);">E</span>
<svg class="a" style="left:1850px;top:376px;" width="36" height="30"><path d="M8 3 V26 M30.5 3 V26 M8 15.5 H30.5" stroke="#22b050" stroke-width="2.2" fill="none"/></svg>
<svg class="a" style="left:1846px;top:462px;" width="30" height="25"><path d="M0 0 H22 Q29 0 29 7 V17 Q29 24 22 24 H0Z" fill="#8e939b" opacity=".85"/><path d="M10 8 H23 L16.5 15Z" fill="#a8acb3" stroke="#c8ccd2" stroke-width=".8"/></svg>
<div class="a" style="left:0px;top:949px;width:1919px;height:2px;background:#2f3643;"></div>
<!-- s_status -->
<div class="a" style="left:0px;top:951px;width:1919px;height:78px;background:#222933;"></div>
<div class="a" style="left:340px;top:984px;width:135px;height:36px;background:#3b4453;"></div>
<span class="t" style="left:342.0px;top:993.2px;font-size:18px;line-height:18px;color:#f0f0f0;transform:scaleX(1.0269);text-shadow:0.4px 0 0 #f0f0f0;">'-10 7/32", 0'-0"</span>
<div class="a" style="left:481px;top:984px;width:72px;height:36px;background:#3b4453;"></div>
<span class="t" style="left:487.0px;top:993.2px;font-size:18px;line-height:18px;color:#f0f0f0;transform:scaleX(0.9529);text-shadow:0.4px 0 0 #f0f0f0;">MODEL</span>
<div class="a" style="left:559.5px;top:984px;width:34.5px;height:36px;background:#5a8fc8;"></div>
<svg class="a" style="left:565px;top:990px;" width="24" height="24"><path d="M4.5 0 V24 M12 0 V24 M19.5 0 V24 M0 4.5 H24 M0 12 H24 M0 19.5 H24" stroke="#f0f0f0" stroke-width="1.4"/></svg>
<div class="a" style="left:596px;top:984px;width:34px;height:36px;background:#5a8fc8;"></div>
<svg class="a" style="left:603px;top:992px;" width="20" height="20"><rect x="0" y="0" width="3.2" height="3.2" fill="#f0f0f0"/><rect x="0" y="8" width="3.2" height="3.2" fill="#f0f0f0"/><rect x="0" y="16" width="3.2" height="3.2" fill="#f0f0f0"/><rect x="8" y="0" width="3.2" height="3.2" fill="#f0f0f0"/><rect x="8" y="8" width="3.2" height="3.2" fill="#f0f0f0"/><rect x="8" y="16" width="3.2" height="3.2" fill="#f0f0f0"/><rect x="16" y="0" width="3.2" height="3.2" fill="#f0f0f0"/><rect x="16" y="8" width="3.2" height="3.2" fill="#f0f0f0"/><rect x="16" y="16" width="3.2" height="3.2" fill="#f0f0f0"/></svg>
<div class="a" style="left:632px;top:984px;width:23px;height:36px;background:#3b4453;"></div>
<svg class="a" style="left:637.0px;top:998.5px;" width="12" height="7"><polygon points="0,0 12,0 6.0,7" fill="#e0e0e0"/></svg>
<div class="a" style="left:661.5px;top:984px;width:34.5px;height:36px;background:#5a8fc8;"></div>
<svg class="a" style="left:667px;top:992px;" width="24" height="20"><path d="M5 0 V11 M0 5.5 H10.5" stroke="#f0f0f0" stroke-width="1.5"/><rect x="9" y="12" width="15" height="6" fill="#f0f0f0"/></svg>
<div class="a" style="left:698px;top:984px;width:36px;height:36px;background:#3b4453;"></div>
<svg class="a" style="left:704px;top:990px;" width="25" height="24"><path d="M1 0 V23 H25 M1 17 H7 V23" stroke="#f0f0f0" stroke-width="1.5" fill="none"/></svg>
<div class="a" style="left:735.5px;top:984px;width:34.5px;height:36px;background:#5a8fc8;"></div>
<svg class="a" style="left:740px;top:990px;" width="26" height="24"><circle cx="11" cy="13" r="9.5" fill="none" stroke="#f0f0f0" stroke-width="1.5"/><path d="M11 13 H25 M11 13 L21 1" stroke="#f0f0f0" stroke-width="1.5"/></svg>
<div class="a" style="left:772px;top:984px;width:23px;height:36px;background:#3b4453;"></div>
<svg class="a" style="left:777.0px;top:998.5px;" width="12" height="7"><polygon points="0,0 12,0 6.0,7" fill="#e0e0e0"/></svg>
<div class="a" style="left:798px;top:984px;width:34px;height:36px;background:#5a8fc8;"></div>
<svg class="a" style="left:803px;top:992px;" width="24" height="20"><path d="M0 19 H24 M0 19 L19 0" stroke="#f0f0f0" stroke-width="1.5"/><rect x="7" y="8" width="4.5" height="4.5" fill="#f0f0f0"/></svg>
<div class="a" style="left:834px;top:984px;width:34px;height:36px;background:#5a8fc8;"></div>
<svg class="a" style="left:838px;top:990px;" width="26" height="24"><rect x="5" y="4" width="19" height="19" fill="none" stroke="#f0f0f0" stroke-width="1.5"/><rect x="1" y="1" width="6" height="6" fill="#5a8fc8" stroke="#f0f0f0" stroke-width="1.3"/></svg>
<div class="a" style="left:870px;top:984px;width:23px;height:36px;background:#3b4453;"></div>
<svg class="a" style="left:875.0px;top:998.5px;" width="12" height="7"><polygon points="0,0 12,0 6.0,7" fill="#e0e0e0"/></svg>
<div class="a" style="left:895px;top:984px;width:36px;height:36px;background:#3b4453;"></div>
<svg class="a" style="left:901px;top:992px;" width="24" height="20"><rect x="0" y="0" width="24" height="1.3" fill="#f0f0f0"/><rect x="0" y="4" width="24" height="2.2" fill="#f0f0f0"/><rect x="0" y="9.5" width="24" height="3.2" fill="#f0f0f0"/><rect x="0" y="15" width="13" height="4.5" fill="#f0f0f0"/><rect x="13" y="16" width="11" height="1.3" fill="#f0f0f0"/></svg>
<div class="a" style="left:933px;top:984px;width:36px;height:36px;background:#3b4453;"></div>
<svg class="a" style="left:938px;top:990px;" width="26" height="25"><path d="M4 0 V8 M0 4 H8" stroke="#f0f0f0" stroke-width="1.3"/><path d="M7 20 V7 H21" stroke="#f0f0f0" stroke-width="1.3" fill="none"/><rect x="10" y="10" width="15" height="15" fill="#78d898"/></svg>
<div class="a" style="left:975px;top:984px;width:36px;height:36px;background:#3b4453;"></div>
<svg class="a" style="left:980px;top:991px;" width="28" height="24"><path d="M12 1 L15.5 13 L22 22 L15 19 L12 16 L9 19 L2 22 L8.5 13Z" fill="#d8d8d8"/><circle cx="22" cy="4.5" r="3.4" fill="none" stroke="#f0f0f0" stroke-width="1.3"/></svg>
<div class="a" style="left:1012px;top:984px;width:34px;height:36px;background:#5a8fc8;"></div>
<svg class="a" style="left:1016px;top:991px;" width="28" height="24"><path d="M12 1 L15.5 13 L22 22 L15 19 L12 16 L9 19 L2 22 L8.5 13Z" fill="#ffffff"/><path d="M22 0 L18 6 H21 L19 11 L25 4 H22 L24 0Z" fill="#f0f0f0"/></svg>
<div class="a" style="left:1047px;top:984px;width:159px;height:36px;background:#3b4453;"></div>
<svg class="a" style="left:1052px;top:991px;" width="24" height="24"><path d="M12 1 L15.5 13 L22 22 L15 19 L12 16 L9 19 L2 22 L8.5 13Z" fill="#d8d8d8"/></svg>
<span class="t" style="left:1091.0px;top:993.2px;font-size:18px;line-height:18px;color:#f0f0f0;transform:scaleX(1.0368);text-shadow:0.4px 0 0 #f0f0f0;">1/8" = 1'-0"</span>
<svg class="a" style="left:1189.0px;top:998.5px;" width="12" height="7"><polygon points="0,0 12,0 6.0,7" fill="#e0e0e0"/></svg>
<div class="a" style="left:1213px;top:984px;width:60px;height:36px;background:#3b4453;"></div>
<svg class="a" style="left:1219px;top:990px;" width="24" height="24"><g transform="translate(12,12)"><rect x="-2.6" y="-12" width="5.2" height="24" fill="#e0e0e0" transform="rotate(0)"/><rect x="-2.6" y="-12" width="5.2" height="24" fill="#e0e0e0" transform="rotate(45)"/><rect x="-2.6" y="-12" width="5.2" height="24" fill="#e0e0e0" transform="rotate(90)"/><rect x="-2.6" y="-12" width="5.2" height="24" fill="#e0e0e0" transform="rotate(135)"/><circle r="8.5" fill="#e0e0e0"/><circle r="4" fill="#3b4453"/></g></svg>
<svg class="a" style="left:1255.0px;top:998.5px;" width="12" height="7"><polygon points="0,0 12,0 6.0,7" fill="#e0e0e0"/></svg>
<div class="a" style="left:1275px;top:984px;width:36px;height:36px;background:#3b4453;"></div>
<svg class="a" style="left:1281px;top:991px;" width="23" height="23"><path d="M11.5 0 V23 M0 11.5 H23" stroke="#f0f0f0" stroke-width="2.6"/></svg>
<div class="a" style="left:1317px;top:984px;width:148px;height:36px;background:#3b4453;"></div>
<span class="t" style="left:1318.0px;top:993.2px;font-size:18px;line-height:18px;color:#f0f0f0;transform:scaleX(1.0692);text-shadow:0.4px 0 0 #f0f0f0;">Medium Detail</span>
<svg class="a" style="left:1447.0px;top:998.5px;" width="12" height="7"><polygon points="0,0 12,0 6.0,7" fill="#e0e0e0"/></svg>
<div class="a" style="left:1467px;top:984px;width:96px;height:36px;background:#3b4453;"></div>
<svg class="a" style="left:1474px;top:989px;" width="24" height="26"><path d="M12 9 L23 15 L12 21 L1 15Z" fill="#5aa8e8"/><path d="M1 15 L12 21 L23 15 V17 L12 23 L1 17Z" fill="#2f7cc0"/><path d="M3 19 L12 24 L21 19 V22 L12 26 L3 22Z" fill="#e8e8e8"/><path d="M4 13 V5 Q12 -1 20 5 V13" fill="none" stroke="#e0e0e0" stroke-width="1" stroke-dasharray="2 1.6"/></svg>
<span class="t" style="left:1513.0px;top:993.2px;font-size:18px;line-height:18px;color:#f0f0f0;transform:scaleX(1.0881);text-shadow:0.4px 0 0 #f0f0f0;">3'-6"</span>
<div class="a" style="left:1569px;top:984px;width:77px;height:36px;background:#3b4453;"></div>
<svg class="a" style="left:1574px;top:990px;" width="26" height="26"><path d="M8 7 L18 2 L25 6 V17 L15 23 L8 19Z M8 7 L15 11 L25 6 M15 11 V23" fill="none" stroke="#e0e0e0" stroke-width="1.2"/><path d="M1 2 H6 L1 8 H6" fill="none" stroke="#e0e0e0" stroke-width="1.1"/><rect x="1.5" y="13" width="5" height="5" fill="none" stroke="#e8d8a0" stroke-width="1.1"/><path d="M4 9 V13" stroke="#e0e0e0" stroke-width="1"/></svg>
<span class="t" style="left:1611.0px;top:993.2px;font-size:18px;line-height:18px;color:#f0f0f0;transform:scaleX(1.0776);text-shadow:0.4px 0 0 #f0f0f0;">+0"</span>
<div class="a" style="left:1652px;top:984px;width:36px;height:36px;background:#3b4453;"></div>
<svg class="a" style="left:1657px;top:989px;" width="26" height="27"><rect x="1" y="1" width="9" height="9" fill="none" stroke="#f0f0f0" stroke-width="1.3"/><circle cx="19.5" cy="12" r="5" fill="none" stroke="#f0f0f0" stroke-width="1.3"/><path d="M10 15 L15.5 24 H4.5Z" fill="none" stroke="#f0f0f0" stroke-width="1.3"/></svg>
<div class="a" style="left:1692px;top:984px;width:33px;height:36px;background:#3b4453;"></div>
<svg class="a" style="left:1696px;top:990px;" width="28" height="26"><rect x="1" y="1" width="20" height="20" fill="#b8b8b8" stroke="#e4e4e4" stroke-width="2"/><rect x="4" y="6" width="12" height="12" fill="#d8d8d8" stroke="#888" stroke-width="1"/><circle cx="9" cy="12" r="2" fill="#777"/><rect x="13" y="15" width="12" height="10" rx="1" fill="#f0a820"/><path d="M15.5 15 V12.5 A3.5 3.5 0 0 1 22.5 12.5 V15" fill="none" stroke="#f0a820" stroke-width="2"/><rect x="18" y="18.5" width="2" height="3" fill="#fff"/></svg>
<div class="a" style="left:1725.5px;top:984px;width:34.0px;height:36px;background:#5a8fc8;"></div>
<svg class="a" style="left:1731px;top:991px;" width="23" height="23"><defs><pattern id="hp" width="3" height="3" patternUnits="userSpaceOnUse" patternTransform="rotate(-45)"><rect width="3" height="1.2" fill="#f0f0f0"/></pattern></defs><rect x="1" y="5" width="16" height="16" fill="url(#hp)" stroke="#f0f0f0" stroke-width="1.4"/><path d="M1 5 L6 1 H21 V16 L17 21 M17 5 L21 1" fill="none" stroke="#f0f0f0" stroke-width="1.4"/></svg>
<div class="a" style="left:1759.5px;top:984px;width:6px;height:36px;background:#3b4453;"></div>
<div class="a" style="left:1765px;top:984px;width:34.5px;height:36px;background:#5a8fc8;"></div>
<svg class="a" style="left:1770px;top:991px;" width="25" height="23"><path d="M7 1 H24 L17 8 H0Z M7 11 H24 L17 18 H0Z" fill="#f0f0f0"/><path d="M11 5 H15 V11 H17 L13 16 L9 11 H11 V9 H9 V5Z" fill="#5a8fc8" stroke="#f0f0f0" stroke-width=".9"/></svg>
<div class="a" style="left:1800px;top:984px;width:45px;height:36px;background:#3b4453;"></div>
<svg class="a" style="left:1803px;top:984px;" width="44" height="36"><path d="M2 3 H24 L32 11 V30 H2Z" fill="#2f70b8"/><path d="M24 3 V11 H32Z" fill="#6ca8e0"/><path d="M2 18 H14 L18 22 H12 V30 H2Z" fill="#f0b830"/><path d="M9 0 V18 M2 9 H20" stroke="#f0f0f0" stroke-width="1.4"/><circle cx="9" cy="9" r="2.6" fill="#2f70b8" stroke="#f0f0f0" stroke-width="1.4"/><path d="M17 25 L23 31 L36 18" fill="none" stroke="#38b048" stroke-width="4.2"/></svg>
<div class="a" style="left:1849px;top:984px;width:70px;height:36px;background:#3b4453;"></div>
<svg class="a" style="left:1855px;top:993px;" width="25" height="18"><rect x=".8" y=".8" width="23" height="16" fill="none" stroke="#f0f0f0" stroke-width="1.6"/><path d="M4 14 L9 9 M4 10 V14 H8 M20 4 L15 9 M16 4 H20 V8" stroke="#f0f0f0" stroke-width="1.4" fill="none"/></svg>
<div class="a" style="left:1890px;top:991px;width:25px;height:3px;background:#f0f0f0;"></div>
<div class="a" style="left:1890px;top:1000.5px;width:25px;height:3px;background:#f0f0f0;"></div>
<div class="a" style="left:1890px;top:1010px;width:25px;height:3px;background:#f0f0f0;"></div>
<div class="a" style="left:1049px;top:1020px;width:73px;height:9px;background:#3b4453;"></div>
<!-- s_cmd -->
<div class="a" style="left:382px;top:911px;width:87px;height:38px;background:#272d38;opacity:.92;border-radius:4px 0 0 4px;"></div>
<svg class="a" style="left:394px;top:915px;" width="4" height="30"><path d="M2 0 V30" stroke="#c0c4ca" stroke-width="1.6" stroke-dasharray="1.6 2.2"/></svg>
<svg class="a" style="left:407px;top:924px;" width="15" height="15"><path d="M2 2 L13 13 M13 2 L2 13" stroke="#b4b8be" stroke-width="2.6"/></svg>
<svg class="a" style="left:437px;top:917px;" width="27" height="27"><path d="M2.5 25 L4.5 27 L17 13.5 C20 14.5 23.5 13.5 25 10.5 C26 8.5 26 6.5 25.5 5 L21.5 9 L18.5 8.5 L18 5.5 L22 1.5 C20.5 1 18.5 1 16.5 2 C13.5 3.5 12.5 7 13.5 10 L1 22.5Z" fill="#d4d6da"/></svg>
<div class="a" style="left:468px;top:912px;width:358px;height:37px;background:linear-gradient(#d2d2d2,#c6c6c6);"></div>
<svg class="a" style="left:474px;top:922px;" width="25" height="19"><rect x=".7" y=".7" width="23" height="17" fill="#c8c8c8" stroke="#444" stroke-width="1.4"/><rect x="1" y="1" width="22.5" height="4" fill="#555"/><path d="M4 8.5 L7 11 L4 13.5 M9 14.5 H14" stroke="#333" stroke-width="1.3" fill="none"/></svg>
<svg class="a" style="left:502.0px;top:929.0px;" width="10" height="6"><polygon points="0,0 10,0 5.0,6" fill="#555"/></svg>
<span class="t" style="left:514.0px;top:922.6px;font-size:18.3px;line-height:18.3px;color:#111;font-family:'Liberation Mono',monospace;">_AecSpaceProperties</span>
<!-- s_palette -->
<div class="a" style="left:0px;top:492px;width:373px;height:496px;background:#272e39;border-radius:8px 8px 6px 0;box-shadow:0 0 0 1px #1c222b;"></div>
<div class="a" style="left:0px;top:980px;width:339.5px;height:39.5px;background:#272e39;border-radius:0 0 5px 5px;"></div>
<div class="a" style="left:38px;top:498px;width:331px;height:486px;background:#3b4453;border-radius:7px 7px 0 7px;"></div>
<div class="a" style="left:38px;top:660px;width:297px;height:353.5px;background:#3b4453;border-radius:0 0 6px 7px;"></div>
<div class="a" style="left:335px;top:661px;width:34px;height:164px;background:#2b323e;border-radius:0 0 6px 0;"></div>
<div class="a" style="left:335px;top:826px;width:34px;height:162px;background:#2b323e;border-radius:0 6px 6px 0;"></div>
<div class="a" style="left:335px;top:661px;width:1px;height:350px;background:#262c37;"></div>
<svg class="a" style="left:12px;top:502px;" width="14" height="14"><path d="M1.5 1.5 L12.5 12.5 M12.5 1.5 L1.5 12.5" stroke="#d8d8d8" stroke-width="2.8"/></svg>
<svg class="a" style="left:12px;top:531px;" width="14" height="14"><path d="M2 0 V14" stroke="#d8d8d8" stroke-width="2.4"/><path d="M13 1 V13 L5 7Z" fill="#d8d8d8"/></svg>
<svg class="a" style="left:11px;top:559px;" width="16" height="16"><g stroke="#d8d8d8" stroke-width="3"><path d="M8 0 V16 M0 8 H16 M2.3 2.3 L13.7 13.7 M13.7 2.3 L2.3 13.7"/></g><circle cx="8" cy="8" r="5" fill="#d8d8d8"/><circle cx="8" cy="8" r="2" fill="#222933"/></svg>
<div class="a" style="left:69px;top:517px;width:150px;height:33px;background:#4c576a;box-shadow:inset 0 0 0 1px #5a6578;"></div>
<span class="t" style="left:74.0px;top:525.5px;font-size:17.5px;line-height:17.5px;color:#e8e8e8;transform:scaleX(0.9472);">Space</span>
<svg class="a" style="left:199.0px;top:530.5px;" width="16" height="9"><polygon points="0,0 16,0 8.0,9" fill="#d8d8d8"/></svg>
<svg class="a" style="left:228px;top:520px;" width="25" height="27"><rect x="0" y="5" width="13" height="13" fill="#5aa8e8"/><rect x="7" y="12" width="14" height="14" fill="#7cc0f4" stroke="#3b4453" stroke-width="1"/><path d="M18.5 0 V11 M13 5.5 H24" stroke="#48c060" stroke-width="3"/></svg>
<svg class="a" style="left:259px;top:520px;" width="26" height="27"><rect x="1" y="1" width="18" height="14" fill="#58b868" stroke="#a8e0b0" stroke-width="1" stroke-dasharray="2 1.5"/><path d="M15 11 L25 20 L20.5 20.5 L23 26 L20.5 27 L18 21.5 L15 24.5Z" fill="#f4f4f4" stroke="#3b4453" stroke-width=".8"/></svg>
<svg class="a" style="left:291px;top:519px;" width="27" height="28"><path d="M1 9 L11 18 L6.5 18.5 L9 24 L6.5 25 L4 19.5 L1 22.5Z" fill="#f4f4f4"/><path d="M10 0 L5 8 H9 L7 13 L14 5 H10 L12 0Z" fill="#f4c848"/><rect x="12" y="12" width="14" height="14" fill="#f4f4f4"/><path d="M15 16 H17 M15 19.5 H17 M15 23 H17" stroke="#2878c8" stroke-width="2"/><path d="M18.5 16 H24 M18.5 19.5 H24 M18.5 23 H24" stroke="#2878c8" stroke-width="1.6"/></svg>
<div class="a" style="left:47px;top:558px;width:6px;height:234px;background:#2a303b;border-radius:3px;"></div>
<div class="a" style="left:68px;top:563px;width:245px;height:32px;background:#2a303b;"></div>
<span class="t" style="left:78.0px;top:570.5px;font-size:17.5px;line-height:17.5px;color:#ffffff;font-weight:bold;transform:scaleX(0.9550);">BASIC</span>
<svg class="a" style="left:289.5px;top:574.5px;" width="13" height="7"><polygon points="0,0 13,0 6.5,7" fill="#e0e0e0"/></svg>
<div class="a" style="left:68px;top:596px;width:245px;height:30px;background:#475163;box-shadow:inset 0 0 0 1.5px #2a303b;"></div>
<span class="t" style="left:78.0px;top:602.5px;font-size:17.5px;line-height:17.5px;color:#c4c8ce;font-weight:bold;">General</span>
<svg class="a" style="left:253px;top:598px;" width="25" height="26"><rect x="1" y="1" width="23" height="24" fill="#2f6ca8" stroke="#6cb4ec" stroke-width="1.6"/><path d="M3 23 V15 L8 10 L12 15 L15 13 L22 19 V23Z" fill="#6cb4ec"/><rect x="12" y="5" width="5" height="5" fill="#f2f2e8"/><rect x="15" y="13" width="5" height="5" fill="#f0c050"/><rect x="16" y="20" width="3" height="2" fill="#b0b4ba"/></svg>
<svg class="a" style="left:292.0px;top:603.5px;" width="8" height="13"><polygon points="8,0 8,13 0,6.5" fill="#d8d8d8"/></svg>
<div class="a" style="left:68px;top:627px;width:245px;height:30px;background:#475163;box-shadow:inset 0 0 0 1.5px #2a303b;"></div>
<span class="t" style="left:78.0px;top:633.5px;font-size:17.5px;line-height:17.5px;color:#c4c8ce;font-weight:bold;transform:scaleX(1.0186);">Component Dimensions</span>
<svg class="a" style="left:253px;top:629px;" width="25" height="26"><rect x="1" y="1" width="23" height="24" fill="#2f6ca8" stroke="#6cb4ec" stroke-width="1.6"/><path d="M3 23 V15 L8 10 L12 15 L15 13 L22 19 V23Z" fill="#6cb4ec"/><rect x="12" y="5" width="5" height="5" fill="#f2f2e8"/><rect x="15" y="13" width="5" height="5" fill="#f0c050"/><rect x="16" y="20" width="3" height="2" fill="#b0b4ba"/></svg>
<svg class="a" style="left:292.0px;top:634.5px;" width="8" height="13"><polygon points="8,0 8,13 0,6.5" fill="#d8d8d8"/></svg>
<div class="a" style="left:68px;top:658px;width:245px;height:30px;background:#475163;box-shadow:inset 0 0 0 1.5px #2a303b;"></div>
<span class="t" style="left:78.0px;top:664.5px;font-size:17.5px;line-height:17.5px;color:#ffffff;font-weight:bold;transform:scaleX(1.0093);">Actual Dimensions</span>
<svg class="a" style="left:253px;top:660px;" width="25" height="26"><rect x="1" y="1" width="23" height="24" fill="#2f6ca8" stroke="#6cb4ec" stroke-width="1.6"/><path d="M3 23 V15 L8 10 L12 15 L15 13 L22 19 V23Z" fill="#6cb4ec"/><rect x="12" y="5" width="5" height="5" fill="#f2f2e8"/><rect x="15" y="13" width="5" height="5" fill="#f0c050"/><rect x="16" y="20" width="3" height="2" fill="#b0b4ba"/></svg>
<svg class="a" style="left:289.5px;top:668.5px;" width="13" height="7"><polygon points="0,0 13,0 6.5,7" fill="#e0e0e0"/></svg>
<div class="a" style="left:95px;top:688px;width:218px;height:323px;background:#2a303b;"></div>
<div class="a" style="left:96.5px;top:843px;width:215px;height:168px;background:#3b4453;"></div>
<div class="a" style="left:96.5px;top:689px;width:93px;height:29px;background:#3b4453;"></div>
<div class="a" style="left:191px;top:689px;width:120.5px;height:29px;background:#3b4453;"></div>
<span class="t" style="left:104.0px;top:695.5px;font-size:17.5px;line-height:17.5px;color:#e8e8e8;transform:scaleX(1.0275);">Length</span>
<span class="t" style="left:195.0px;top:696.0px;font-size:17.5px;line-height:17.5px;color:#98a0ac;transform:scaleX(1.0709);">12'-4 1/4"</span>
<div class="a" style="left:96.5px;top:720px;width:93px;height:29px;background:#3b4453;"></div>
<div class="a" style="left:191px;top:720px;width:120.5px;height:29px;background:#3b4453;"></div>
<span class="t" style="left:104.0px;top:726.5px;font-size:17.5px;line-height:17.5px;color:#e8e8e8;transform:scaleX(1.0730);">Width</span>
<span class="t" style="left:195.0px;top:727.0px;font-size:17.5px;line-height:17.5px;color:#98a0ac;transform:scaleX(1.0709);">10'-2 1/4"</span>
<div class="a" style="left:96.5px;top:751px;width:93px;height:29px;background:#3b4453;"></div>
<div class="a" style="left:191px;top:751px;width:120.5px;height:29px;background:#3b4453;"></div>
<span class="t" style="left:104.0px;top:757.5px;font-size:17.5px;line-height:17.5px;color:#e8e8e8;transform:scaleX(0.9276);">Base area</span>
<span class="t" style="left:195.0px;top:758.0px;font-size:17.5px;line-height:17.5px;color:#98a0ac;transform:scaleX(0.9464);">126  SF</span>
<div class="a" style="left:96.5px;top:782px;width:93px;height:29px;background:#3b4453;"></div>
<div class="a" style="left:191px;top:782px;width:120.5px;height:29px;background:#3b4453;"></div>
<span class="t" style="left:104.0px;top:788.5px;font-size:17.5px;line-height:17.5px;color:#e8e8e8;transform:scaleX(0.9771);">Base pe...</span>
<span class="t" style="left:194.0px;top:789.0px;font-size:17.5px;line-height:17.5px;color:#98a0ac;transform:scaleX(1.0767);">45'-1"</span>
<div class="a" style="left:96.5px;top:813px;width:93px;height:29px;background:#3b4453;"></div>
<div class="a" style="left:191px;top:813px;width:120.5px;height:29px;background:#3b4453;"></div>
<span class="t" style="left:104.0px;top:819.5px;font-size:17.5px;line-height:17.5px;color:#e8e8e8;transform:scaleX(0.9791);">Base vol...</span>
<span class="t" style="left:195.0px;top:820.0px;font-size:17.5px;line-height:17.5px;color:#98a0ac;transform:scaleX(0.9585);">1070  CF</span>
<svg class="a" style="left:79px;top:696px;" width="12" height="14"><path d="M1 13 V10 H11 V13 M3 10 L5 2 H7 L9 10 M4.3 7 H7.7" fill="none" stroke="#5a9ce0" stroke-width="1.5"/></svg>
<svg class="a" style="left:80px;top:728px;" width="11" height="14"><path d="M1.5 1 H9.5 V13 H1.5 Z M1.5 7 H9.5" fill="none" stroke="#5a9ce0" stroke-width="2"/></svg>
<svg class="a" style="left:100px;top:870px;" width="180" height="142"><defs><linearGradient id="gw" x1="0" y1="0" x2="1" y2="1"><stop offset="0" stop-color="#ecece9"/><stop offset="1" stop-color="#cfcfcc"/></linearGradient>
<linearGradient id="gd" x1="0" y1="0" x2="1" y2="1"><stop offset="0" stop-color="#8c8c8a"/><stop offset="1" stop-color="#666"/></linearGradient>
<linearGradient id="gr" x1="0" y1="0" x2="1" y2="0"><stop offset="0" stop-color="#9a9a98"/><stop offset=".5" stop-color="#d4d4d2"/><stop offset="1" stop-color="#e2e2e0"/></linearGradient>
<clipPath id="ic"><rect x="-4" y="0" width="190" height="140"/></clipPath></defs>
<g clip-path="url(#ic)">
<path d="M23.4 8 H116 L119.8 13 V36 H72 L31.6 11.3Z" fill="#dededb"/>
<path d="M23.4 8 L72 39 V140 L23.4 106Z" fill="url(#gw)"/>
<path d="M72 39 L119.8 36 L121.6 42.6 L169.4 66.4 H77.6Z" fill="#e6e6e3"/>
<path d="M77.6 75.6 H119.8 V104.1 H77.6Z" fill="url(#gd)"/>
<path d="M119.8 75.6 H169.4 V133.5 L119.8 104.1Z" fill="url(#gr)"/>
<path d="M77.6 104.1 H119.8 L169.4 133.5 V136.2 H77.6Z" fill="#d8d8d5"/>
<path d="M23.4 8 L72 39 M31.6 11.3 L74 39.5 M27 36.1 L72 62 M27 36.1 V101 M27 101 L72 104 M27 36.1 H72 M119.8 75.6 V104.1 L169.4 133.5 M77.6 104.1 H119.8" stroke="#7c7c7a" stroke-width=".7" fill="none"/>
<path d="M74.8 41.6 V140 M72 71 H170.3 M72 138 H170.3" stroke="#d8525a" stroke-width="5.6" fill="none"/>
<path d="M74.8 41.6 V140 M72 71 H170.3 M72 138 H170.3" stroke="#9a3a40" stroke-width=".6" fill="none" opacity=".5"/>
<path d="M119.8 13.2 L172.2 42.6 V139 M74.8 42.6 H172.2 M25.2 106 V126 L40.8 140" stroke="#4c8ae0" stroke-width="1.5" stroke-dasharray="5 2.5" fill="none"/>
<path d="M0.4 126.1 H22.5 M4.1 129.8 L18.8 140" stroke="#4c8ae0" stroke-width="1.8" fill="none"/><path d="M0.4 126.1 L9 127 L4 133Z" fill="#4c8ae0"/>
</g></svg>
<div class="a" style="left:96.5px;top:1009px;width:216px;height:3px;background:#3b4453;"></div>
<span class="t" style="left:353.5px;top:578px;font-size:17.5px;line-height:17.5px;color:#e8e8e8;transform-origin:0 0;transform:rotate(-90deg) translate(-26.0px,-8.8px) scaleX(0.955);">Design</span>
<span class="t" style="left:353.5px;top:741px;font-size:17.5px;line-height:17.5px;color:#d0d4da;transform-origin:0 0;transform:rotate(-90deg) translate(-29.0px,-8.8px) scaleX(1.011);">Display</span>
<span class="t" style="left:353.5px;top:905px;font-size:17.5px;line-height:17.5px;color:#d0d4da;transform-origin:0 0;transform:rotate(-90deg) translate(-56.5px,-8.8px) scaleX(0.976);">Extended Data</span>
<span class="t" style="left:19px;top:927px;font-size:17px;line-height:17px;color:#c8ccd2;transform-origin:0 0;transform:rotate(-90deg) translate(-47.5px,-8.5px) scaleX(0.869);">PROPERTIES</span>
<svg class="a" style="left:9px;top:989px;" width="20" height="24"><rect x=".5" y=".5" width="19" height="23" fill="#e8e8e8" stroke="#9a9a9a"/><rect x="2.5" y="2.5" width="15" height="10" fill="#6cc0f8"/><path d="M3 16 H17 M3 20 H17 M7 14 V18 M13 18 V22" stroke="#555" stroke-width="1.2"/></svg>
<!-- s_dialog -->
<div class="a" style="left:826px;top:141px;width:1021px;height:808px;background:#f0f0f0;box-shadow:0 0 0 1px #1f5fa8 inset, 0 2px 14px rgba(0,0,0,.45);"></div>
<div class="a" style="left:827px;top:142px;width:1019px;height:44px;background:#ffffff;"></div>
<svg class="a" style="left:838px;top:151px;" width="24" height="24"><rect width="24" height="24" fill="#f7e4e4"/><path d="M3.5 20 L9.5 3.5 H14.5 L20.5 20 H16.2 L15 16.2 H9 L7.8 20 Z M10.2 12.8 H13.8 L12 7 Z" fill="#c8262c"/></svg>
<span class="t" style="left:867.5px;top:156.9px;font-size:17px;line-height:17px;color:#000000;transform:scaleX(1.0275);">Space/Zone Manager</span>
<svg class="a" style="left:1814px;top:157px;" width="15" height="15"><path d="M.7 .7 L14.3 14.3 M14.3 .7 L.7 14.3" stroke="#111" stroke-width="1.2"/></svg>
<div class="a" style="left:844px;top:203.5px;width:199px;height:665.5px;background:#ffffff;box-shadow:inset 2px 2px 0 #6a6a6a, inset -1px -1px 0 #e8e8e8;"></div>
<div class="a" style="left:1048px;top:203.5px;width:782px;height:666.5px;background:#f0f0f0;box-shadow:inset 2px 2px 0 #6a6a6a, inset -1.5px -1.5px 0 #ffffff;"></div>
<svg class="a" style="left:0px;top:0px;" width="1919" height="1029"><path d="M860.5 219.5 H876 M860.5 219.5 V241 M867 247.5 H876 M887.5 258 V415  M894 275.5 H902 M894 303.5 H902 M894 331.5 H902 M894 359.5 H902 M894 387.5 H902 M894 415.5 H902 M914.5 428 V590 M914.5 443.5 H930 M914.5 471.5 H930 M914.5 499.5 H930 M921 527.5 H930 M914.5 555.5 H930 M921 583.5 H930" stroke="#8a8a8a" stroke-width="1" stroke-dasharray="1 1.6" fill="none"/></svg>
<svg class="a" style="left:876px;top:207px;" width="22" height="24"><path d="M0 0 H15 L22 7 V24 H0Z" fill="#2c64ac"/><path d="M15 0 V7 H22Z" fill="#8cb8e4"/><path d="M0 15 H9 L22 19 V24 H0Z" fill="#f0b428"/><path d="M6.5 0 V14 M0 7 H13" stroke="#fff" stroke-width="1.3"/><rect x="4" y="4.5" width="5" height="5" fill="#2c64ac" stroke="#fff" stroke-width="1.2"/></svg>
<span class="t" style="left:904.5px;top:212.2px;font-size:17px;line-height:17px;color:#000000;transform:scaleX(1.0425);">Architecture.dwg</span>
<svg class="a" style="left:854px;top:241px;" width="13" height="13"><rect x=".5" y=".5" width="12" height="12" fill="#fcfcfc" stroke="#9a9a9a"/><path d="M3 6.5 H10" stroke="#2a3a8c" stroke-width="1.3"/><rect x="1" y="8" width="11" height="4" fill="#e4e4e4" opacity=".6"/></svg>
<svg class="a" style="left:875px;top:237px;" width="24" height="21"><path d="M.6 20 V1 H8 L10.5 4.5 H22.5 V20Z" fill="#f4f4f4" stroke="#4a4a4a" stroke-width="1.1"/><path d="M8 1 L5.5 4.5 H10.5" fill="none" stroke="#4a4a4a" stroke-width="1"/></svg>
<div class="a" style="left:904px;top:236px;width:138px;height:24px;overflow:hidden;">
<span class="t" style="left:0.5px;top:4.2px;font-size:17px;line-height:17px;color:#000000;transform:scaleX(1.0076);">Unattached Spaces</span>
</div>
<svg class="a" style="left:881px;top:269.0px;" width="13" height="13"><rect x=".5" y=".5" width="12" height="12" fill="#fcfcfc" stroke="#9a9a9a"/><path d="M3 6.5 H10" stroke="#2a3a8c" stroke-width="1.3"/><path d="M6.5 3 V10" stroke="#2a3a8c" stroke-width="1.3"/><rect x="1" y="8" width="11" height="4" fill="#e4e4e4" opacity=".6"/></svg>
<svg class="a" style="left:902px;top:263.5px;" width="22" height="21"><rect x=".6" y=".6" width="20.5" height="19.5" fill="#f4f4f4" stroke="#3c4654" stroke-width="1.2"/><rect x="7.5" y="4.5" width="13" height="9.5" fill="#4c9ce8"/><path d="M7.5 1 V20 M1 4.5 H21 M1 14 H21" stroke="#3c6ea8" stroke-width=".9" stroke-dasharray="2 1.5"/></svg>
<span class="t" style="left:931.0px;top:268.2px;font-size:17px;line-height:17px;color:#000000;transform:scaleX(0.9750);">Space</span>
<svg class="a" style="left:881px;top:297.0px;" width="13" height="13"><rect x=".5" y=".5" width="12" height="12" fill="#fcfcfc" stroke="#9a9a9a"/><path d="M3 6.5 H10" stroke="#2a3a8c" stroke-width="1.3"/><path d="M6.5 3 V10" stroke="#2a3a8c" stroke-width="1.3"/><rect x="1" y="8" width="11" height="4" fill="#e4e4e4" opacity=".6"/></svg>
<svg class="a" style="left:902px;top:291.5px;" width="22" height="21"><rect x=".6" y=".6" width="20.5" height="19.5" fill="#f4f4f4" stroke="#3c4654" stroke-width="1.2"/><rect x="7.5" y="4.5" width="13" height="9.5" fill="#4c9ce8"/><path d="M7.5 1 V20 M1 4.5 H21 M1 14 H21" stroke="#3c6ea8" stroke-width=".9" stroke-dasharray="2 1.5"/></svg>
<span class="t" style="left:931.0px;top:296.2px;font-size:17px;line-height:17px;color:#000000;transform:scaleX(0.9750);">Space</span>
<svg class="a" style="left:881px;top:325.0px;" width="13" height="13"><rect x=".5" y=".5" width="12" height="12" fill="#fcfcfc" stroke="#9a9a9a"/><path d="M3 6.5 H10" stroke="#2a3a8c" stroke-width="1.3"/><path d="M6.5 3 V10" stroke="#2a3a8c" stroke-width="1.3"/><rect x="1" y="8" width="11" height="4" fill="#e4e4e4" opacity=".6"/></svg>
<svg class="a" style="left:902px;top:319.5px;" width="22" height="21"><rect x=".6" y=".6" width="20.5" height="19.5" fill="#f4f4f4" stroke="#3c4654" stroke-width="1.2"/><rect x="7.5" y="4.5" width="13" height="9.5" fill="#4c9ce8"/><path d="M7.5 1 V20 M1 4.5 H21 M1 14 H21" stroke="#3c6ea8" stroke-width=".9" stroke-dasharray="2 1.5"/></svg>
<span class="t" style="left:931.0px;top:324.2px;font-size:17px;line-height:17px;color:#000000;transform:scaleX(0.9750);">Space</span>
<svg class="a" style="left:881px;top:353.0px;" width="13" height="13"><rect x=".5" y=".5" width="12" height="12" fill="#fcfcfc" stroke="#9a9a9a"/><path d="M3 6.5 H10" stroke="#2a3a8c" stroke-width="1.3"/><path d="M6.5 3 V10" stroke="#2a3a8c" stroke-width="1.3"/><rect x="1" y="8" width="11" height="4" fill="#e4e4e4" opacity=".6"/></svg>
<svg class="a" style="left:902px;top:347.5px;" width="22" height="21"><rect x=".6" y=".6" width="20.5" height="19.5" fill="#f4f4f4" stroke="#3c4654" stroke-width="1.2"/><rect x="7.5" y="4.5" width="13" height="9.5" fill="#4c9ce8"/><path d="M7.5 1 V20 M1 4.5 H21 M1 14 H21" stroke="#3c6ea8" stroke-width=".9" stroke-dasharray="2 1.5"/></svg>
<span class="t" style="left:931.0px;top:352.2px;font-size:17px;line-height:17px;color:#000000;transform:scaleX(0.9750);">Space</span>
<svg class="a" style="left:881px;top:381.0px;" width="13" height="13"><rect x=".5" y=".5" width="12" height="12" fill="#fcfcfc" stroke="#9a9a9a"/><path d="M3 6.5 H10" stroke="#2a3a8c" stroke-width="1.3"/><path d="M6.5 3 V10" stroke="#2a3a8c" stroke-width="1.3"/><rect x="1" y="8" width="11" height="4" fill="#e4e4e4" opacity=".6"/></svg>
<svg class="a" style="left:902px;top:375.5px;" width="22" height="21"><rect x=".6" y=".6" width="20.5" height="19.5" fill="#f4f4f4" stroke="#3c4654" stroke-width="1.2"/><rect x="7.5" y="4.5" width="13" height="9.5" fill="#4c9ce8"/><path d="M7.5 1 V20 M1 4.5 H21 M1 14 H21" stroke="#3c6ea8" stroke-width=".9" stroke-dasharray="2 1.5"/></svg>
<span class="t" style="left:931.0px;top:380.2px;font-size:17px;line-height:17px;color:#000000;transform:scaleX(0.9750);">Space</span>
<svg class="a" style="left:881px;top:409.0px;" width="13" height="13"><rect x=".5" y=".5" width="12" height="12" fill="#fcfcfc" stroke="#9a9a9a"/><path d="M3 6.5 H10" stroke="#2a3a8c" stroke-width="1.3"/><rect x="1" y="8" width="11" height="4" fill="#e4e4e4" opacity=".6"/></svg>
<svg class="a" style="left:902px;top:403.5px;" width="22" height="21"><rect x=".6" y=".6" width="20.5" height="19.5" fill="#f4f4f4" stroke="#3c4654" stroke-width="1.2"/><rect x="7.5" y="4.5" width="13" height="9.5" fill="#4c9ce8"/><path d="M7.5 1 V20 M1 4.5 H21 M1 14 H21" stroke="#3c6ea8" stroke-width=".9" stroke-dasharray="2 1.5"/></svg>
<span class="t" style="left:931.0px;top:408.2px;font-size:17px;line-height:17px;color:#000000;font-weight:bold;transform:scaleX(1.0451);">Space (2)</span>
<svg class="a" style="left:929px;top:432px;" width="23" height="23"><path d="M1 6 L6 1 H22 L17 6Z" fill="#7cc0f0" stroke="#5a6472" stroke-width="1.1"/><path d="M17 6 L22 1 V17 L17 22Z" fill="#d0dce8" stroke="#5a6472" stroke-width="1.1"/><rect x="1" y="6" width="16" height="16" fill="#ffffff" stroke="#5a6472" stroke-width="1.1"/><path d="M1 22 L6 17 H22 L17 22Z" fill="#e8e8e8" stroke="#5a6472" stroke-width="1.1"/><path d="M6 6 V17" stroke="#5a6472" stroke-width=".8" stroke-dasharray="1.5 1.5"/></svg>
<span class="t" style="left:958.0px;top:436.2px;font-size:17px;line-height:17px;color:#000000;">Ceiling</span>
<svg class="a" style="left:929px;top:460px;" width="23" height="23"><path d="M1 6 L6 1 H22 L17 6Z" fill="#e8e8e8" stroke="#5a6472" stroke-width="1.1"/><path d="M17 6 L22 1 V17 L17 22Z" fill="#d0dce8" stroke="#5a6472" stroke-width="1.1"/><rect x="1" y="6" width="16" height="16" fill="#ffffff" stroke="#5a6472" stroke-width="1.1"/><path d="M1 22 L6 17 H22 L17 22Z" fill="#7cc0f0" stroke="#5a6472" stroke-width="1.1"/><path d="M6 6 V17" stroke="#5a6472" stroke-width=".8" stroke-dasharray="1.5 1.5"/></svg>
<span class="t" style="left:958.0px;top:464.2px;font-size:17px;line-height:17px;color:#000000;transform:scaleX(1.0585);">Floor</span>
<div class="a" style="left:956px;top:485px;width:77px;height:28px;background:#0078d7;"></div>
<svg class="a" style="left:929px;top:488px;" width="23" height="23"><path d="M1 6 L6 1 H22 L17 6Z" fill="#e8e8e8" stroke="#1c2430" stroke-width="1.6"/><path d="M17 6 L22 1 V17 L17 22Z" fill="#d0dce8" stroke="#1c2430" stroke-width="1.6"/><rect x="1" y="6" width="16" height="16" fill="#7aa4c4" stroke="#1c2430" stroke-width="1.6"/><path d="M6 6 V17 H17" stroke="#6a8cb0" stroke-width=".8" stroke-dasharray="1.5 1.5" fill="none"/></svg>
<span class="t" style="left:958.0px;top:492.2px;font-size:17px;line-height:17px;color:#ffffff;transform:scaleX(0.9895);">Surface 1</span>
<svg class="a" style="left:908px;top:521.0px;" width="13" height="13"><rect x=".5" y=".5" width="12" height="12" fill="#fcfcfc" stroke="#9a9a9a"/><path d="M3 6.5 H10" stroke="#2a3a8c" stroke-width="1.3"/><path d="M6.5 3 V10" stroke="#2a3a8c" stroke-width="1.3"/><rect x="1" y="8" width="11" height="4" fill="#e4e4e4" opacity=".6"/></svg>
<svg class="a" style="left:929px;top:516.0px;" width="23" height="23"><path d="M1 6 L6 1 H22 L17 6Z" fill="#e8e8e8" stroke="#5a6472" stroke-width="1.1"/><path d="M17 6 L22 1 V17 L17 22Z" fill="#d0dce8" stroke="#5a6472" stroke-width="1.1"/><rect x="1" y="6" width="16" height="16" fill="#a8cce8" stroke="#5a6472" stroke-width="1.1"/><path d="M6 6 V17 H17" stroke="#6a8cb0" stroke-width=".8" stroke-dasharray="1.5 1.5" fill="none"/></svg>
<span class="t" style="left:958.0px;top:520.2px;font-size:17px;line-height:17px;color:#000000;">Surface 2</span>
<svg class="a" style="left:929px;top:544.0px;" width="23" height="23"><path d="M1 6 L6 1 H22 L17 6Z" fill="#e8e8e8" stroke="#5a6472" stroke-width="1.1"/><path d="M17 6 L22 1 V17 L17 22Z" fill="#d0dce8" stroke="#5a6472" stroke-width="1.1"/><rect x="1" y="6" width="16" height="16" fill="#a8cce8" stroke="#5a6472" stroke-width="1.1"/><path d="M6 6 V17 H17" stroke="#6a8cb0" stroke-width=".8" stroke-dasharray="1.5 1.5" fill="none"/></svg>
<span class="t" style="left:958.0px;top:548.2px;font-size:17px;line-height:17px;color:#000000;">Surface 3</span>
<svg class="a" style="left:908px;top:577.0px;" width="13" height="13"><rect x=".5" y=".5" width="12" height="12" fill="#fcfcfc" stroke="#9a9a9a"/><path d="M3 6.5 H10" stroke="#2a3a8c" stroke-width="1.3"/><path d="M6.5 3 V10" stroke="#2a3a8c" stroke-width="1.3"/><rect x="1" y="8" width="11" height="4" fill="#e4e4e4" opacity=".6"/></svg>
<svg class="a" style="left:929px;top:572.0px;" width="23" height="23"><path d="M1 6 L6 1 H22 L17 6Z" fill="#e8e8e8" stroke="#5a6472" stroke-width="1.1"/><path d="M17 6 L22 1 V17 L17 22Z" fill="#d0dce8" stroke="#5a6472" stroke-width="1.1"/><rect x="1" y="6" width="16" height="16" fill="#a8cce8" stroke="#5a6472" stroke-width="1.1"/><path d="M6 6 V17 H17" stroke="#6a8cb0" stroke-width=".8" stroke-dasharray="1.5 1.5" fill="none"/></svg>
<span class="t" style="left:958.0px;top:576.2px;font-size:17px;line-height:17px;color:#000000;">Surface 4</span>
<div class="a" style="left:846px;top:843.5px;width:195.5px;height:24px;background:#f0f0f0;"></div>
<div class="a" style="left:871px;top:843.5px;width:135px;height:24px;background:#cdcdcd;"></div>
<svg class="a" style="left:852px;top:849px;" width="10" height="13"><path d="M8 1 L2.5 6.5 L8 12" fill="none" stroke="#444" stroke-width="2.2"/></svg>
<svg class="a" style="left:1022px;top:849px;" width="10" height="13"><path d="M2 1 L7.5 6.5 L2 12" fill="none" stroke="#444" stroke-width="2.2"/></svg>
<span class="t" style="left:1081.0px;top:254.9px;font-size:16.5px;line-height:16.5px;color:#000000;transform:scaleX(0.9568);">Name:</span>
<div class="a" style="left:1234px;top:245px;width:578px;height:32.5px;background:#ffffff;box-shadow:inset 0 0 0 1.2px #6e6e6e;"></div>
<span class="t" style="left:1241.0px;top:249.9px;font-size:16.5px;line-height:16.5px;color:#000000;transform:scaleX(0.9203);">Surface 1</span>
<span class="t" style="left:1081.0px;top:327.4px;font-size:16.5px;line-height:16.5px;color:#000000;transform:scaleX(0.9912);">Type:</span>
<div class="a" style="left:1234px;top:321px;width:578px;height:26.5px;background:#e2e2e2;box-shadow:inset 0 0 0 1px #adadad;"></div>
<span class="t" style="left:1238.0px;top:326.9px;font-size:16.5px;line-height:16.5px;color:#000000;transform:scaleX(1.0068);">Interior Wall</span>
<svg class="a" style="left:1791px;top:330px;" width="14" height="9"><path d="M1.5 1.5 L7 7 L12.5 1.5" fill="none" stroke="#222" stroke-width="1.4"/></svg>
<span class="t" style="left:1081.0px;top:396.4px;font-size:16.5px;line-height:16.5px;color:#000000;transform:scaleX(0.9451);">Style:</span>
<div class="a" style="left:1234px;top:390px;width:578px;height:26.5px;background:#cccccc;box-shadow:inset 0 0 0 1px #bfbfbf;"></div>
<span class="t" style="left:1238.0px;top:395.9px;font-size:16.5px;line-height:16.5px;color:#6d6d6d;transform:scaleX(0.9734);">01 floor partitions$0$Stud-3.625 GWB-0.625 Each Side (2 Hour)</span>
<svg class="a" style="left:1791px;top:399px;" width="14" height="9"><path d="M1.5 1.5 L7 7 L12.5 1.5" fill="none" stroke="#b0b0b0" stroke-width="1.4"/></svg>
<div class="a" style="left:1081px;top:449px;width:19.5px;height:19.5px;background:#ffffff;box-shadow:inset 0 0 0 1px #cccccc;"></div>
<span class="t" style="left:1106.0px;top:450.9px;font-size:16.5px;line-height:16.5px;color:#6d6d6d;transform:scaleX(0.9535);">Override Default Surface Height</span>
<span class="t" style="left:1081.0px;top:501.9px;font-size:16.5px;line-height:16.5px;color:#000000;transform:scaleX(0.9755);">Height:</span>
<div class="a" style="left:1234px;top:495.5px;width:124px;height:32px;background:#f0f0f0;box-shadow:inset 0 0 0 1.2px #6e6e6e;"></div>
<span class="t" style="left:1241.0px;top:499.9px;font-size:16.5px;line-height:16.5px;color:#000000;">10'-0"</span>
<span class="t" style="left:1081.0px;top:547.4px;font-size:16.5px;line-height:16.5px;color:#000000;transform:scaleX(0.9944);">Width:</span>
<div class="a" style="left:1234px;top:538.5px;width:124px;height:32px;background:#f0f0f0;box-shadow:inset 0 0 0 1.2px #6e6e6e;"></div>
<span class="t" style="left:1241.0px;top:542.9px;font-size:16.5px;line-height:16.5px;color:#000000;transform:scaleX(1.0208);">12'-4 1/4"</span>
<span class="t" style="left:1396.5px;top:501.9px;font-size:16.5px;line-height:16.5px;color:#000000;transform:scaleX(0.9635);">Area:</span>
<div class="a" style="left:1526px;top:495.5px;width:133px;height:32px;background:#f0f0f0;box-shadow:inset 0 0 0 1.2px #6e6e6e;"></div>
<span class="t" style="left:1533.0px;top:499.9px;font-size:16.5px;line-height:16.5px;color:#000000;transform:scaleX(0.9399);">124 SF</span>
<div class="a" style="left:847.5px;top:884.5px;width:19.5px;height:19.5px;background:#ffffff;box-shadow:inset 0 0 0 1.3px #222;"></div>
<svg class="a" style="left:847.5px;top:884.5px;" width="20" height="20"><path d="M4 10 L8 14.5 L16 5" fill="none" stroke="#111" stroke-width="1.6"/></svg>
<span class="t" style="left:871.5px;top:886.1px;font-size:16.5px;line-height:16.5px;color:#000000;transform:scaleX(0.9393);">Show All Zones and Spaces</span>
<div class="a" style="left:847.5px;top:910.5px;width:19.5px;height:19.5px;background:#ffffff;box-shadow:inset 0 0 0 1.3px #222;"></div>
<svg class="a" style="left:847.5px;top:910.5px;" width="20" height="20"><path d="M4 10 L8 14.5 L16 5" fill="none" stroke="#111" stroke-width="1.6"/></svg>
<span class="t" style="left:871.5px;top:912.1px;font-size:16.5px;line-height:16.5px;color:#000000;transform:scaleX(0.9116);">Show Space Surfaces</span>
<div class="a" style="left:1457px;top:888px;width:111px;height:31px;background:#e1e1e1;box-shadow:inset 0 0 0 1px #adadad;"></div>
<span class="t" style="left:1501.5px;top:895.9px;font-size:16.5px;line-height:16.5px;color:#000000;transform:scaleX(0.9228);">OK</span>
<div class="a" style="left:1587px;top:888px;width:111px;height:31px;background:#e1e1e1;box-shadow:inset 0 0 0 1px #adadad;"></div>
<span class="t" style="left:1619.5px;top:895.9px;font-size:16.5px;line-height:16.5px;color:#000000;transform:scaleX(0.8956);">Cancel</span>
<div class="a" style="left:1718px;top:888px;width:111px;height:31px;background:#e1e1e1;box-shadow:inset 0 0 0 1px #adadad;"></div>
<span class="t" style="left:1757.0px;top:895.9px;font-size:16.5px;line-height:16.5px;color:#000000;transform:scaleX(0.9724);">Help</span>
</body></html>
